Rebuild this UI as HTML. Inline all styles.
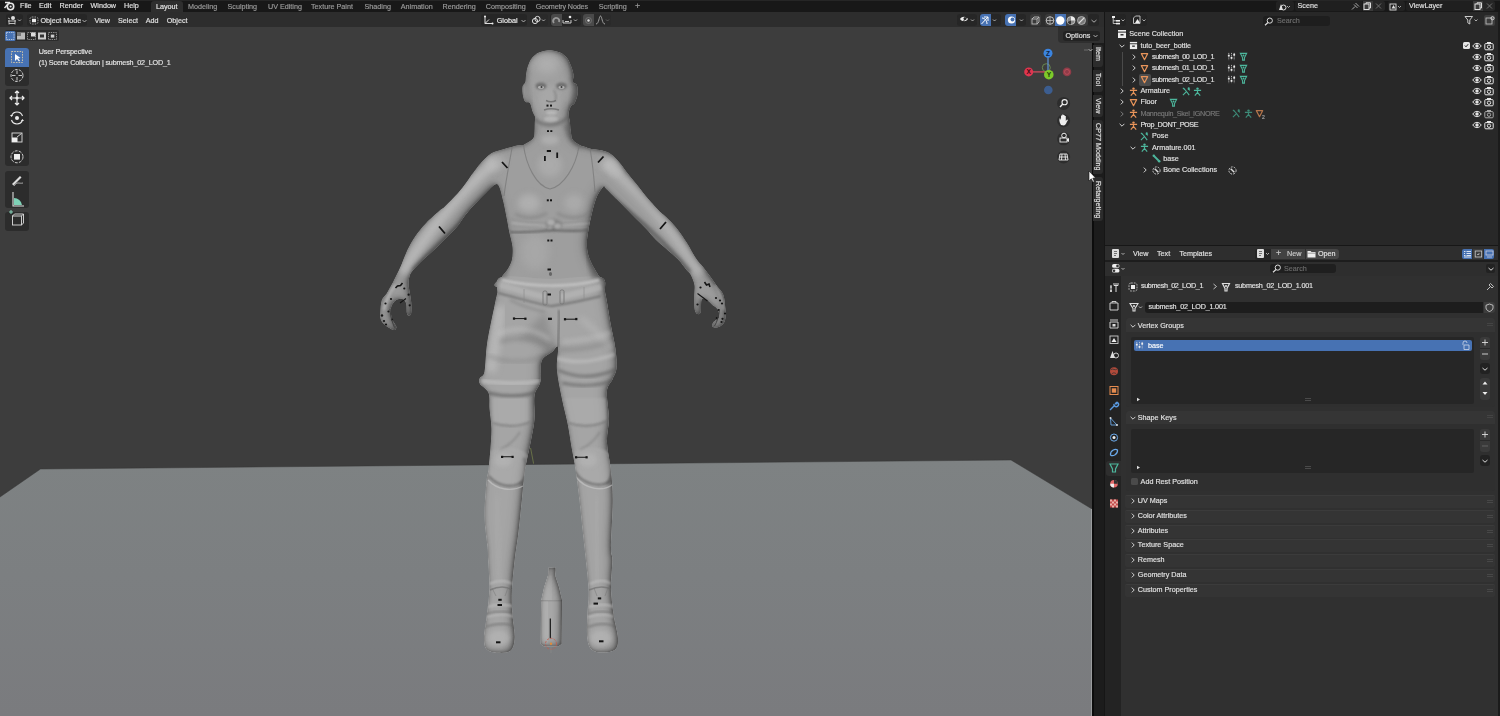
<!DOCTYPE html>
<html><head><meta charset="utf-8">
<style>
*{margin:0;padding:0;box-sizing:border-box}
html,body{width:1500px;height:716px;overflow:hidden;background:#171717;font-family:"Liberation Sans",sans-serif;color:#e2e2e2;font-size:7.2px}
.a{position:absolute}
.t{position:absolute;white-space:nowrap;line-height:8px;height:11px;padding-bottom:3px;-webkit-text-stroke:.15px currentColor;filter:grayscale(1)}
.g{color:#9c9c9c}
.w{color:#e6e6e6}
svg{position:absolute;overflow:visible}
#top{left:0;top:0;width:1500px;height:12px;background:#181818}
#vp{left:0;top:0;width:1105px;height:716px;background:#3d3d3d;overflow:hidden}
#vphdr{left:0;top:12px;width:1104px;height:15px;background:#2d2d2d}
#ntabs{left:1092px;top:43px;width:13px;height:673px;background:#1c1c1c}
#outl{left:1105px;top:12px;width:395px;height:233px;background:#282828}
#txthdr{left:1105px;top:246px;width:395px;height:15px;background:#2e2e2e}
#props{left:1105px;top:261px;width:395px;height:455px;background:#303030}
.btn{position:absolute;background:#2b2b2b;border-radius:2px}
.tab{position:absolute;background:#2a2a2a;border-radius:2px}
.row{position:absolute;left:1125px;width:370px;height:13px;background:#343434;border-radius:2px;border-top:1px solid #3b3b3b}
</style></head><body>
<div id="vp" class="a">
<svg width="1092" height="716" style="left:0;top:0">
<defs><linearGradient id="flg" x1="0" y1="460" x2="0" y2="716" gradientUnits="userSpaceOnUse"><stop offset="0" stop-color="#7e8283"/><stop offset=".45" stop-color="#7c7f81"/><stop offset="1" stop-color="#7a7b7e"/></linearGradient></defs><polygon points="0,497 40.5,469 1011,460 1092,509 1092,716 0,716" fill="url(#flg)"/><polyline points="0,497 40.5,469 1011,460 1092,509" fill="none" stroke="#353535" stroke-width=".8" opacity=".6"/>
<g id="fig"><defs>
<filter id="b0_5" x="-50%" y="-50%" width="200%" height="200%"><feGaussianBlur stdDeviation="0.5"/></filter>
<filter id="b0_8" x="-50%" y="-50%" width="200%" height="200%"><feGaussianBlur stdDeviation="0.8"/></filter>
<filter id="b1" x="-50%" y="-50%" width="200%" height="200%"><feGaussianBlur stdDeviation="1"/></filter>
<filter id="b1_5" x="-50%" y="-50%" width="200%" height="200%"><feGaussianBlur stdDeviation="1.5"/></filter>
<filter id="b2" x="-50%" y="-50%" width="200%" height="200%"><feGaussianBlur stdDeviation="2"/></filter>
<filter id="b3" x="-50%" y="-50%" width="200%" height="200%"><feGaussianBlur stdDeviation="3"/></filter>
<filter id="b4_5" x="-50%" y="-50%" width="200%" height="200%"><feGaussianBlur stdDeviation="4.5"/></filter>
<filter id="rim" x="-10%" y="-10%" width="120%" height="120%">
<feGaussianBlur in="SourceAlpha" stdDeviation="2" result="bl"/>
<feOffset in="bl" dx="-1.5" dy="-0.5" result="off"/>
<feComposite in="SourceAlpha" in2="off" operator="arithmetic" k2="1" k3="-1" result="rim"/>
<feFlood flood-color="#383838" flood-opacity="1"/>
<feComposite in2="rim" operator="in" result="rimc"/>
<feGaussianBlur in="SourceAlpha" stdDeviation="5" result="bl2"/>
<feOffset in="bl2" dx="-3.5" dy="-1" result="off2"/>
<feComposite in="SourceAlpha" in2="off2" operator="arithmetic" k2="1" k3="-1" result="rim2"/>
<feFlood flood-color="#4a4a4a" flood-opacity=".75"/>
<feComposite in2="rim2" operator="in" result="rimc2"/>
<feMerge><feMergeNode in="SourceGraphic"/><feMergeNode in="rimc2"/><feMergeNode in="rimc"/></feMerge>
</filter>
<clipPath id="cUp"><path d="M549.5,50.2 C546.0,50.2 541.9,51.2 539.0,52.5 C536.1,53.8 533.8,55.8 532.0,58.0 C530.2,60.2 529.0,63.2 528.0,66.0 C527.0,68.8 526.5,72.3 526.1,75.0 C525.7,77.7 526.0,80.0 525.4,81.9 C524.8,83.8 523.0,84.2 522.6,86.5 C522.2,88.8 522.5,93.2 523.0,95.7 C523.5,98.2 524.2,100.5 525.4,101.8 C526.6,103.1 528.7,101.5 530.0,103.3 C531.3,105.1 531.7,109.8 533.0,112.6 C534.3,115.4 535.4,118.0 538.0,120.0 C540.6,122.0 544.9,124.4 548.4,124.8 C551.9,125.2 555.9,124.0 559.0,122.5 C562.1,121.0 564.8,118.3 566.8,115.6 C568.8,112.9 569.4,108.5 570.7,106.4 C572.0,104.4 573.4,105.3 574.5,103.3 C575.6,101.2 577.2,97.2 577.6,94.1 C578.0,91.0 577.6,86.9 576.8,84.9 C576.0,82.9 573.5,83.6 573.0,81.9 C572.5,80.2 573.8,77.7 573.5,75.0 C573.2,72.3 572.1,68.8 571.0,66.0 C569.9,63.2 568.8,60.2 567.0,58.0 C565.2,55.8 562.9,53.8 560.0,52.5 C557.1,51.2 553.0,50.2 549.5,50.2Z"/><path d="M537.0,108.0 C539.8,107.0 547.2,114.0 552.0,114.0 C556.8,114.0 563.1,107.0 566.0,108.0 C568.9,109.0 568.7,116.2 569.5,120.0 C570.3,123.8 570.1,127.6 570.7,131.0 C571.3,134.4 571.1,137.6 573.0,140.2 C574.9,142.8 579.0,144.3 582.2,146.3 C585.4,148.3 603.7,151.1 592.0,152.0 C580.3,152.9 523.4,153.2 512.0,152.0 C500.6,150.8 520.3,147.0 523.8,144.8 C527.3,142.6 531.2,141.0 533.0,138.7 C534.8,136.4 534.3,134.1 534.6,131.0 C534.9,127.9 534.6,123.8 535.0,120.0 C535.4,116.2 534.2,109.0 537.0,108.0Z"/><path d="M523.0,145.0 C527.6,145.1 535.3,146.3 540.0,147.0 C544.7,147.7 547.2,149.0 551.0,149.0 C554.8,149.0 557.8,147.4 563.0,147.0 C568.2,146.6 577.5,146.0 582.0,146.3 C586.5,146.6 586.6,148.1 590.0,148.8 C593.4,149.5 598.8,149.7 602.3,150.6 C605.8,151.5 608.5,152.6 611.3,154.5 C614.1,156.4 616.5,159.3 619.1,162.3 C621.7,165.3 624.0,168.8 626.9,172.4 C629.8,176.0 633.1,180.0 636.3,184.0 C639.5,188.0 642.4,192.1 646.1,196.5 C649.8,200.9 655.4,207.1 658.7,210.5 C662.0,213.9 663.0,214.0 666.0,217.0 C669.0,220.0 673.6,224.4 677.0,228.7 C680.4,233.0 684.1,238.7 686.6,242.6 C689.1,246.5 690.3,249.1 692.0,252.0 C693.7,254.9 695.2,257.5 697.0,260.0 C698.8,262.5 700.8,264.2 703.0,267.0 C705.2,269.8 708.0,273.4 710.4,276.7 C712.8,279.9 715.2,283.6 717.3,286.5 C719.4,289.4 721.9,291.1 723.2,294.4 C724.5,297.7 724.7,302.4 725.1,306.1 C725.5,309.9 725.9,314.0 725.6,316.9 C725.3,319.8 724.6,321.9 723.2,323.7 C721.8,325.5 718.8,327.0 717.0,327.5 C715.2,328.0 713.0,327.4 712.4,326.5 C711.8,325.6 712.4,323.6 713.5,322.0 C714.6,320.4 718.6,319.1 719.2,316.9 C719.8,314.7 718.4,311.0 717.3,309.0 C716.2,307.0 714.2,306.5 712.4,305.0 C710.6,303.5 708.3,300.6 706.5,299.8 C704.7,299.0 702.6,298.0 701.6,300.0 C700.6,302.0 701.4,309.7 700.7,312.0 C700.1,314.3 698.7,314.3 697.7,314.0 C696.7,313.7 695.4,313.0 694.8,310.0 C694.2,307.0 694.3,300.2 694.3,296.0 C694.2,291.8 695.1,288.5 694.5,285.0 C693.9,281.5 692.2,277.5 690.9,275.0 C689.6,272.5 688.7,272.6 686.6,270.0 C684.5,267.4 681.7,263.0 678.2,259.4 C674.7,255.8 669.3,251.5 665.6,248.2 C661.9,244.9 659.1,243.1 655.9,239.8 C652.6,236.6 650.1,232.9 646.1,228.7 C642.1,224.5 637.0,219.6 632.1,214.7 C627.2,209.8 621.2,203.7 616.8,199.3 C612.4,194.9 607.9,190.3 605.7,188.2 C603.5,186.1 605.0,185.1 603.5,186.5 C602.0,187.9 598.8,192.3 596.8,196.8 C594.8,201.3 593.2,207.9 591.8,213.5 C590.4,219.1 589.2,225.3 588.4,230.3 C587.6,235.3 586.8,239.5 586.8,243.7 C586.8,247.9 587.3,251.5 588.4,255.4 C589.5,259.3 591.8,263.8 593.5,267.1 C595.2,270.5 597.1,272.7 598.5,275.5 C599.9,278.3 609.7,281.6 601.8,284.0 C593.9,286.4 568.4,289.5 551.0,290.0 C533.6,290.5 505.7,289.3 497.5,287.2 C489.3,285.1 500.1,280.0 501.7,277.2 C503.2,274.4 505.1,273.3 506.8,270.5 C508.5,267.7 510.8,264.3 511.8,260.4 C512.8,256.5 513.0,251.8 512.6,247.0 C512.2,242.2 510.3,236.7 509.3,231.9 C508.3,227.2 507.8,223.5 506.8,218.5 C505.8,213.5 504.7,207.1 503.4,201.8 C502.1,196.5 500.6,189.5 499.2,186.7 C497.8,183.8 497.1,183.5 494.7,184.7 C492.3,185.9 488.2,190.5 484.7,194.0 C481.2,197.5 476.8,201.9 473.5,205.5 C470.2,209.1 467.8,211.9 465.0,215.5 C462.2,219.1 460.2,223.1 457.0,226.8 C453.8,230.5 450.0,233.8 445.9,237.9 C441.8,242.0 436.8,247.2 432.5,251.3 C428.2,255.4 423.8,258.9 420.2,262.5 C416.6,266.1 413.1,269.7 411.2,272.6 C409.3,275.5 409.2,277.9 408.8,280.0 C408.4,282.1 408.5,283.4 408.6,285.0 C408.7,286.6 408.8,286.6 409.2,289.5 C409.6,292.4 410.9,298.3 411.2,302.2 C411.5,306.1 411.5,310.8 411.2,313.0 C410.9,315.2 409.9,315.4 409.2,315.5 C408.5,315.6 407.5,315.4 407.0,313.5 C406.5,311.6 406.8,306.4 406.3,304.1 C405.8,301.9 405.0,300.9 404.0,300.0 C403.0,299.1 401.8,298.7 400.4,298.8 C399.0,298.9 397.0,299.3 395.5,300.5 C394.0,301.7 392.3,304.1 391.5,306.0 C390.7,307.9 390.5,309.7 390.7,312.0 C390.9,314.3 391.6,317.7 392.5,320.0 C393.4,322.3 395.4,324.6 396.0,326.0 C396.6,327.4 396.4,327.8 396.0,328.5 C395.6,329.2 395.3,330.5 393.6,330.0 C391.9,329.5 387.9,327.4 385.8,325.7 C383.7,324.0 381.8,322.1 380.9,319.8 C380.0,317.5 380.2,315.3 380.4,312.0 C380.5,308.7 380.8,303.3 381.8,300.2 C382.9,297.1 385.0,296.1 386.7,293.4 C388.4,290.6 390.7,286.4 392.2,283.7 C393.7,281.0 394.3,279.6 395.6,277.0 C396.9,274.4 398.5,271.5 400.0,268.1 C401.5,264.8 403.0,260.4 404.5,256.9 C406.0,253.4 407.1,250.4 409.0,246.9 C410.9,243.4 412.9,239.6 415.7,235.7 C418.5,231.8 421.9,227.5 425.8,223.4 C429.7,219.3 436.1,213.7 439.2,211.0 C442.3,208.3 442.1,209.2 444.5,207.0 C446.9,204.8 450.4,201.3 453.4,198.1 C456.4,194.9 459.5,191.5 462.3,188.0 C465.1,184.5 467.8,180.2 470.2,176.9 C472.6,173.6 474.5,170.9 476.9,167.9 C479.3,164.9 482.1,161.5 484.7,159.0 C487.3,156.5 489.5,154.4 492.5,152.8 C495.5,151.2 499.2,150.5 502.6,149.5 C506.0,148.5 509.2,147.4 512.6,146.7 C516.0,145.9 518.4,144.9 523.0,145.0Z"/></clipPath>
<clipPath id="cPants"><path d="M501.8,277.0 C510.8,274.6 534.7,279.0 551.0,279.0 C567.3,279.0 590.8,274.6 599.8,277.0 C608.8,279.4 603.5,285.7 605.3,293.6 C607.1,301.5 609.0,315.4 610.7,324.5 C612.4,333.6 614.3,340.8 615.3,348.0 C616.3,355.2 617.0,362.8 616.5,368.0 C616.0,373.2 614.2,375.1 612.6,379.0 C611.0,382.9 607.5,384.7 606.9,391.3 C606.3,397.9 608.9,410.2 608.9,418.7 C608.9,427.2 606.6,433.7 606.9,442.2 C607.2,450.7 609.8,459.9 610.8,469.5 C611.8,479.1 612.8,487.0 612.8,500.0 C612.8,513.0 611.1,537.5 611.0,547.5 C610.9,557.5 612.4,553.2 612.4,560.0 C612.4,566.8 610.8,578.7 611.0,588.0 C611.2,597.3 612.6,607.4 613.8,615.8 C615.0,624.2 617.8,632.6 618.0,638.2 C618.2,643.8 617.8,647.0 615.2,649.4 C612.6,651.8 606.6,652.5 602.6,652.5 C598.6,652.5 594.0,651.8 591.5,649.4 C589.0,647.0 588.0,643.8 587.3,638.2 C586.6,632.6 587.1,623.5 587.3,615.8 C587.5,608.1 588.9,601.3 588.7,592.0 C588.5,582.7 586.9,570.0 585.9,560.0 C584.9,550.0 584.0,542.2 582.9,532.2 C581.8,522.2 580.7,510.4 579.5,500.0 C578.3,489.6 576.9,478.2 575.6,469.5 C574.3,460.8 573.0,455.5 571.7,448.0 C570.4,440.5 569.4,432.7 567.8,424.5 C566.2,416.3 563.8,408.1 562.0,399.0 C560.2,389.9 557.7,378.7 557.0,370.0 C556.3,361.3 558.8,350.0 558.0,347.0 C557.2,344.0 554.7,349.7 552.0,352.0 C549.3,354.3 543.6,355.9 541.7,360.8 C539.8,365.7 541.6,375.8 540.4,381.5 C539.2,387.2 535.5,389.0 534.5,395.2 C533.5,401.4 535.1,410.9 534.5,418.7 C533.9,426.5 532.2,433.7 530.6,442.2 C529.0,450.7 526.5,459.9 525.0,469.5 C523.5,479.1 523.0,489.6 521.9,500.0 C520.8,510.4 519.7,522.2 518.5,532.2 C517.3,542.2 515.8,550.0 514.7,560.0 C513.6,570.0 512.2,582.7 511.9,592.0 C511.5,601.3 512.1,608.1 512.6,615.8 C513.1,623.5 515.1,632.4 514.7,638.2 C514.4,644.0 513.3,648.4 510.5,650.8 C507.7,653.2 501.8,653.0 497.9,652.8 C493.9,652.6 489.1,651.8 486.8,649.4 C484.5,647.0 484.0,643.8 484.0,638.2 C484.0,632.6 485.9,624.2 486.8,615.8 C487.7,607.4 489.3,597.3 489.5,588.0 C489.7,578.7 488.5,566.8 488.2,560.0 C487.9,553.2 488.2,554.7 487.6,547.5 C487.0,540.3 484.8,527.8 484.6,516.8 C484.4,505.8 485.9,489.2 486.6,481.3 C487.3,473.4 488.0,475.1 488.6,469.5 C489.2,463.9 490.0,454.8 490.5,448.0 C491.0,441.2 491.6,435.0 491.5,428.5 C491.4,422.0 490.1,414.9 489.6,409.0 C489.1,403.1 490.2,397.2 488.6,393.0 C487.0,388.8 481.5,386.5 480.0,384.0 C478.5,381.5 479.1,380.1 479.8,378.0 C480.6,375.9 483.2,377.6 484.5,371.7 C485.8,365.8 485.6,353.5 487.3,342.6 C489.0,331.7 492.8,314.5 494.5,306.3 C496.2,298.1 496.1,298.5 497.3,293.6 C498.5,288.7 492.9,279.4 501.8,277.0Z"/></clipPath>
<clipPath id="cAll"><path d="M549.5,50.2 C546.0,50.2 541.9,51.2 539.0,52.5 C536.1,53.8 533.8,55.8 532.0,58.0 C530.2,60.2 529.0,63.2 528.0,66.0 C527.0,68.8 526.5,72.3 526.1,75.0 C525.7,77.7 526.0,80.0 525.4,81.9 C524.8,83.8 523.0,84.2 522.6,86.5 C522.2,88.8 522.5,93.2 523.0,95.7 C523.5,98.2 524.2,100.5 525.4,101.8 C526.6,103.1 528.7,101.5 530.0,103.3 C531.3,105.1 531.7,109.8 533.0,112.6 C534.3,115.4 535.4,118.0 538.0,120.0 C540.6,122.0 544.9,124.4 548.4,124.8 C551.9,125.2 555.9,124.0 559.0,122.5 C562.1,121.0 564.8,118.3 566.8,115.6 C568.8,112.9 569.4,108.5 570.7,106.4 C572.0,104.4 573.4,105.3 574.5,103.3 C575.6,101.2 577.2,97.2 577.6,94.1 C578.0,91.0 577.6,86.9 576.8,84.9 C576.0,82.9 573.5,83.6 573.0,81.9 C572.5,80.2 573.8,77.7 573.5,75.0 C573.2,72.3 572.1,68.8 571.0,66.0 C569.9,63.2 568.8,60.2 567.0,58.0 C565.2,55.8 562.9,53.8 560.0,52.5 C557.1,51.2 553.0,50.2 549.5,50.2Z"/><path d="M537.0,108.0 C539.8,107.0 547.2,114.0 552.0,114.0 C556.8,114.0 563.1,107.0 566.0,108.0 C568.9,109.0 568.7,116.2 569.5,120.0 C570.3,123.8 570.1,127.6 570.7,131.0 C571.3,134.4 571.1,137.6 573.0,140.2 C574.9,142.8 579.0,144.3 582.2,146.3 C585.4,148.3 603.7,151.1 592.0,152.0 C580.3,152.9 523.4,153.2 512.0,152.0 C500.6,150.8 520.3,147.0 523.8,144.8 C527.3,142.6 531.2,141.0 533.0,138.7 C534.8,136.4 534.3,134.1 534.6,131.0 C534.9,127.9 534.6,123.8 535.0,120.0 C535.4,116.2 534.2,109.0 537.0,108.0Z"/><path d="M523.0,145.0 C527.6,145.1 535.3,146.3 540.0,147.0 C544.7,147.7 547.2,149.0 551.0,149.0 C554.8,149.0 557.8,147.4 563.0,147.0 C568.2,146.6 577.5,146.0 582.0,146.3 C586.5,146.6 586.6,148.1 590.0,148.8 C593.4,149.5 598.8,149.7 602.3,150.6 C605.8,151.5 608.5,152.6 611.3,154.5 C614.1,156.4 616.5,159.3 619.1,162.3 C621.7,165.3 624.0,168.8 626.9,172.4 C629.8,176.0 633.1,180.0 636.3,184.0 C639.5,188.0 642.4,192.1 646.1,196.5 C649.8,200.9 655.4,207.1 658.7,210.5 C662.0,213.9 663.0,214.0 666.0,217.0 C669.0,220.0 673.6,224.4 677.0,228.7 C680.4,233.0 684.1,238.7 686.6,242.6 C689.1,246.5 690.3,249.1 692.0,252.0 C693.7,254.9 695.2,257.5 697.0,260.0 C698.8,262.5 700.8,264.2 703.0,267.0 C705.2,269.8 708.0,273.4 710.4,276.7 C712.8,279.9 715.2,283.6 717.3,286.5 C719.4,289.4 721.9,291.1 723.2,294.4 C724.5,297.7 724.7,302.4 725.1,306.1 C725.5,309.9 725.9,314.0 725.6,316.9 C725.3,319.8 724.6,321.9 723.2,323.7 C721.8,325.5 718.8,327.0 717.0,327.5 C715.2,328.0 713.0,327.4 712.4,326.5 C711.8,325.6 712.4,323.6 713.5,322.0 C714.6,320.4 718.6,319.1 719.2,316.9 C719.8,314.7 718.4,311.0 717.3,309.0 C716.2,307.0 714.2,306.5 712.4,305.0 C710.6,303.5 708.3,300.6 706.5,299.8 C704.7,299.0 702.6,298.0 701.6,300.0 C700.6,302.0 701.4,309.7 700.7,312.0 C700.1,314.3 698.7,314.3 697.7,314.0 C696.7,313.7 695.4,313.0 694.8,310.0 C694.2,307.0 694.3,300.2 694.3,296.0 C694.2,291.8 695.1,288.5 694.5,285.0 C693.9,281.5 692.2,277.5 690.9,275.0 C689.6,272.5 688.7,272.6 686.6,270.0 C684.5,267.4 681.7,263.0 678.2,259.4 C674.7,255.8 669.3,251.5 665.6,248.2 C661.9,244.9 659.1,243.1 655.9,239.8 C652.6,236.6 650.1,232.9 646.1,228.7 C642.1,224.5 637.0,219.6 632.1,214.7 C627.2,209.8 621.2,203.7 616.8,199.3 C612.4,194.9 607.9,190.3 605.7,188.2 C603.5,186.1 605.0,185.1 603.5,186.5 C602.0,187.9 598.8,192.3 596.8,196.8 C594.8,201.3 593.2,207.9 591.8,213.5 C590.4,219.1 589.2,225.3 588.4,230.3 C587.6,235.3 586.8,239.5 586.8,243.7 C586.8,247.9 587.3,251.5 588.4,255.4 C589.5,259.3 591.8,263.8 593.5,267.1 C595.2,270.5 597.1,272.7 598.5,275.5 C599.9,278.3 609.7,281.6 601.8,284.0 C593.9,286.4 568.4,289.5 551.0,290.0 C533.6,290.5 505.7,289.3 497.5,287.2 C489.3,285.1 500.1,280.0 501.7,277.2 C503.2,274.4 505.1,273.3 506.8,270.5 C508.5,267.7 510.8,264.3 511.8,260.4 C512.8,256.5 513.0,251.8 512.6,247.0 C512.2,242.2 510.3,236.7 509.3,231.9 C508.3,227.2 507.8,223.5 506.8,218.5 C505.8,213.5 504.7,207.1 503.4,201.8 C502.1,196.5 500.6,189.5 499.2,186.7 C497.8,183.8 497.1,183.5 494.7,184.7 C492.3,185.9 488.2,190.5 484.7,194.0 C481.2,197.5 476.8,201.9 473.5,205.5 C470.2,209.1 467.8,211.9 465.0,215.5 C462.2,219.1 460.2,223.1 457.0,226.8 C453.8,230.5 450.0,233.8 445.9,237.9 C441.8,242.0 436.8,247.2 432.5,251.3 C428.2,255.4 423.8,258.9 420.2,262.5 C416.6,266.1 413.1,269.7 411.2,272.6 C409.3,275.5 409.2,277.9 408.8,280.0 C408.4,282.1 408.5,283.4 408.6,285.0 C408.7,286.6 408.8,286.6 409.2,289.5 C409.6,292.4 410.9,298.3 411.2,302.2 C411.5,306.1 411.5,310.8 411.2,313.0 C410.9,315.2 409.9,315.4 409.2,315.5 C408.5,315.6 407.5,315.4 407.0,313.5 C406.5,311.6 406.8,306.4 406.3,304.1 C405.8,301.9 405.0,300.9 404.0,300.0 C403.0,299.1 401.8,298.7 400.4,298.8 C399.0,298.9 397.0,299.3 395.5,300.5 C394.0,301.7 392.3,304.1 391.5,306.0 C390.7,307.9 390.5,309.7 390.7,312.0 C390.9,314.3 391.6,317.7 392.5,320.0 C393.4,322.3 395.4,324.6 396.0,326.0 C396.6,327.4 396.4,327.8 396.0,328.5 C395.6,329.2 395.3,330.5 393.6,330.0 C391.9,329.5 387.9,327.4 385.8,325.7 C383.7,324.0 381.8,322.1 380.9,319.8 C380.0,317.5 380.2,315.3 380.4,312.0 C380.5,308.7 380.8,303.3 381.8,300.2 C382.9,297.1 385.0,296.1 386.7,293.4 C388.4,290.6 390.7,286.4 392.2,283.7 C393.7,281.0 394.3,279.6 395.6,277.0 C396.9,274.4 398.5,271.5 400.0,268.1 C401.5,264.8 403.0,260.4 404.5,256.9 C406.0,253.4 407.1,250.4 409.0,246.9 C410.9,243.4 412.9,239.6 415.7,235.7 C418.5,231.8 421.9,227.5 425.8,223.4 C429.7,219.3 436.1,213.7 439.2,211.0 C442.3,208.3 442.1,209.2 444.5,207.0 C446.9,204.8 450.4,201.3 453.4,198.1 C456.4,194.9 459.5,191.5 462.3,188.0 C465.1,184.5 467.8,180.2 470.2,176.9 C472.6,173.6 474.5,170.9 476.9,167.9 C479.3,164.9 482.1,161.5 484.7,159.0 C487.3,156.5 489.5,154.4 492.5,152.8 C495.5,151.2 499.2,150.5 502.6,149.5 C506.0,148.5 509.2,147.4 512.6,146.7 C516.0,145.9 518.4,144.9 523.0,145.0Z"/><path d="M501.8,277.0 C510.8,274.6 534.7,279.0 551.0,279.0 C567.3,279.0 590.8,274.6 599.8,277.0 C608.8,279.4 603.5,285.7 605.3,293.6 C607.1,301.5 609.0,315.4 610.7,324.5 C612.4,333.6 614.3,340.8 615.3,348.0 C616.3,355.2 617.0,362.8 616.5,368.0 C616.0,373.2 614.2,375.1 612.6,379.0 C611.0,382.9 607.5,384.7 606.9,391.3 C606.3,397.9 608.9,410.2 608.9,418.7 C608.9,427.2 606.6,433.7 606.9,442.2 C607.2,450.7 609.8,459.9 610.8,469.5 C611.8,479.1 612.8,487.0 612.8,500.0 C612.8,513.0 611.1,537.5 611.0,547.5 C610.9,557.5 612.4,553.2 612.4,560.0 C612.4,566.8 610.8,578.7 611.0,588.0 C611.2,597.3 612.6,607.4 613.8,615.8 C615.0,624.2 617.8,632.6 618.0,638.2 C618.2,643.8 617.8,647.0 615.2,649.4 C612.6,651.8 606.6,652.5 602.6,652.5 C598.6,652.5 594.0,651.8 591.5,649.4 C589.0,647.0 588.0,643.8 587.3,638.2 C586.6,632.6 587.1,623.5 587.3,615.8 C587.5,608.1 588.9,601.3 588.7,592.0 C588.5,582.7 586.9,570.0 585.9,560.0 C584.9,550.0 584.0,542.2 582.9,532.2 C581.8,522.2 580.7,510.4 579.5,500.0 C578.3,489.6 576.9,478.2 575.6,469.5 C574.3,460.8 573.0,455.5 571.7,448.0 C570.4,440.5 569.4,432.7 567.8,424.5 C566.2,416.3 563.8,408.1 562.0,399.0 C560.2,389.9 557.7,378.7 557.0,370.0 C556.3,361.3 558.8,350.0 558.0,347.0 C557.2,344.0 554.7,349.7 552.0,352.0 C549.3,354.3 543.6,355.9 541.7,360.8 C539.8,365.7 541.6,375.8 540.4,381.5 C539.2,387.2 535.5,389.0 534.5,395.2 C533.5,401.4 535.1,410.9 534.5,418.7 C533.9,426.5 532.2,433.7 530.6,442.2 C529.0,450.7 526.5,459.9 525.0,469.5 C523.5,479.1 523.0,489.6 521.9,500.0 C520.8,510.4 519.7,522.2 518.5,532.2 C517.3,542.2 515.8,550.0 514.7,560.0 C513.6,570.0 512.2,582.7 511.9,592.0 C511.5,601.3 512.1,608.1 512.6,615.8 C513.1,623.5 515.1,632.4 514.7,638.2 C514.4,644.0 513.3,648.4 510.5,650.8 C507.7,653.2 501.8,653.0 497.9,652.8 C493.9,652.6 489.1,651.8 486.8,649.4 C484.5,647.0 484.0,643.8 484.0,638.2 C484.0,632.6 485.9,624.2 486.8,615.8 C487.7,607.4 489.3,597.3 489.5,588.0 C489.7,578.7 488.5,566.8 488.2,560.0 C487.9,553.2 488.2,554.7 487.6,547.5 C487.0,540.3 484.8,527.8 484.6,516.8 C484.4,505.8 485.9,489.2 486.6,481.3 C487.3,473.4 488.0,475.1 488.6,469.5 C489.2,463.9 490.0,454.8 490.5,448.0 C491.0,441.2 491.6,435.0 491.5,428.5 C491.4,422.0 490.1,414.9 489.6,409.0 C489.1,403.1 490.2,397.2 488.6,393.0 C487.0,388.8 481.5,386.5 480.0,384.0 C478.5,381.5 479.1,380.1 479.8,378.0 C480.6,375.9 483.2,377.6 484.5,371.7 C485.8,365.8 485.6,353.5 487.3,342.6 C489.0,331.7 492.8,314.5 494.5,306.3 C496.2,298.1 496.1,298.5 497.3,293.6 C498.5,288.7 492.9,279.4 501.8,277.0Z"/></clipPath>
</defs>
<g filter="url(#rim)">
<path d="M523.0,145.0 C527.6,145.1 535.3,146.3 540.0,147.0 C544.7,147.7 547.2,149.0 551.0,149.0 C554.8,149.0 557.8,147.4 563.0,147.0 C568.2,146.6 577.5,146.0 582.0,146.3 C586.5,146.6 586.6,148.1 590.0,148.8 C593.4,149.5 598.8,149.7 602.3,150.6 C605.8,151.5 608.5,152.6 611.3,154.5 C614.1,156.4 616.5,159.3 619.1,162.3 C621.7,165.3 624.0,168.8 626.9,172.4 C629.8,176.0 633.1,180.0 636.3,184.0 C639.5,188.0 642.4,192.1 646.1,196.5 C649.8,200.9 655.4,207.1 658.7,210.5 C662.0,213.9 663.0,214.0 666.0,217.0 C669.0,220.0 673.6,224.4 677.0,228.7 C680.4,233.0 684.1,238.7 686.6,242.6 C689.1,246.5 690.3,249.1 692.0,252.0 C693.7,254.9 695.2,257.5 697.0,260.0 C698.8,262.5 700.8,264.2 703.0,267.0 C705.2,269.8 708.0,273.4 710.4,276.7 C712.8,279.9 715.2,283.6 717.3,286.5 C719.4,289.4 721.9,291.1 723.2,294.4 C724.5,297.7 724.7,302.4 725.1,306.1 C725.5,309.9 725.9,314.0 725.6,316.9 C725.3,319.8 724.6,321.9 723.2,323.7 C721.8,325.5 718.8,327.0 717.0,327.5 C715.2,328.0 713.0,327.4 712.4,326.5 C711.8,325.6 712.4,323.6 713.5,322.0 C714.6,320.4 718.6,319.1 719.2,316.9 C719.8,314.7 718.4,311.0 717.3,309.0 C716.2,307.0 714.2,306.5 712.4,305.0 C710.6,303.5 708.3,300.6 706.5,299.8 C704.7,299.0 702.6,298.0 701.6,300.0 C700.6,302.0 701.4,309.7 700.7,312.0 C700.1,314.3 698.7,314.3 697.7,314.0 C696.7,313.7 695.4,313.0 694.8,310.0 C694.2,307.0 694.3,300.2 694.3,296.0 C694.2,291.8 695.1,288.5 694.5,285.0 C693.9,281.5 692.2,277.5 690.9,275.0 C689.6,272.5 688.7,272.6 686.6,270.0 C684.5,267.4 681.7,263.0 678.2,259.4 C674.7,255.8 669.3,251.5 665.6,248.2 C661.9,244.9 659.1,243.1 655.9,239.8 C652.6,236.6 650.1,232.9 646.1,228.7 C642.1,224.5 637.0,219.6 632.1,214.7 C627.2,209.8 621.2,203.7 616.8,199.3 C612.4,194.9 607.9,190.3 605.7,188.2 C603.5,186.1 605.0,185.1 603.5,186.5 C602.0,187.9 598.8,192.3 596.8,196.8 C594.8,201.3 593.2,207.9 591.8,213.5 C590.4,219.1 589.2,225.3 588.4,230.3 C587.6,235.3 586.8,239.5 586.8,243.7 C586.8,247.9 587.3,251.5 588.4,255.4 C589.5,259.3 591.8,263.8 593.5,267.1 C595.2,270.5 597.1,272.7 598.5,275.5 C599.9,278.3 609.7,281.6 601.8,284.0 C593.9,286.4 568.4,289.5 551.0,290.0 C533.6,290.5 505.7,289.3 497.5,287.2 C489.3,285.1 500.1,280.0 501.7,277.2 C503.2,274.4 505.1,273.3 506.8,270.5 C508.5,267.7 510.8,264.3 511.8,260.4 C512.8,256.5 513.0,251.8 512.6,247.0 C512.2,242.2 510.3,236.7 509.3,231.9 C508.3,227.2 507.8,223.5 506.8,218.5 C505.8,213.5 504.7,207.1 503.4,201.8 C502.1,196.5 500.6,189.5 499.2,186.7 C497.8,183.8 497.1,183.5 494.7,184.7 C492.3,185.9 488.2,190.5 484.7,194.0 C481.2,197.5 476.8,201.9 473.5,205.5 C470.2,209.1 467.8,211.9 465.0,215.5 C462.2,219.1 460.2,223.1 457.0,226.8 C453.8,230.5 450.0,233.8 445.9,237.9 C441.8,242.0 436.8,247.2 432.5,251.3 C428.2,255.4 423.8,258.9 420.2,262.5 C416.6,266.1 413.1,269.7 411.2,272.6 C409.3,275.5 409.2,277.9 408.8,280.0 C408.4,282.1 408.5,283.4 408.6,285.0 C408.7,286.6 408.8,286.6 409.2,289.5 C409.6,292.4 410.9,298.3 411.2,302.2 C411.5,306.1 411.5,310.8 411.2,313.0 C410.9,315.2 409.9,315.4 409.2,315.5 C408.5,315.6 407.5,315.4 407.0,313.5 C406.5,311.6 406.8,306.4 406.3,304.1 C405.8,301.9 405.0,300.9 404.0,300.0 C403.0,299.1 401.8,298.7 400.4,298.8 C399.0,298.9 397.0,299.3 395.5,300.5 C394.0,301.7 392.3,304.1 391.5,306.0 C390.7,307.9 390.5,309.7 390.7,312.0 C390.9,314.3 391.6,317.7 392.5,320.0 C393.4,322.3 395.4,324.6 396.0,326.0 C396.6,327.4 396.4,327.8 396.0,328.5 C395.6,329.2 395.3,330.5 393.6,330.0 C391.9,329.5 387.9,327.4 385.8,325.7 C383.7,324.0 381.8,322.1 380.9,319.8 C380.0,317.5 380.2,315.3 380.4,312.0 C380.5,308.7 380.8,303.3 381.8,300.2 C382.9,297.1 385.0,296.1 386.7,293.4 C388.4,290.6 390.7,286.4 392.2,283.7 C393.7,281.0 394.3,279.6 395.6,277.0 C396.9,274.4 398.5,271.5 400.0,268.1 C401.5,264.8 403.0,260.4 404.5,256.9 C406.0,253.4 407.1,250.4 409.0,246.9 C410.9,243.4 412.9,239.6 415.7,235.7 C418.5,231.8 421.9,227.5 425.8,223.4 C429.7,219.3 436.1,213.7 439.2,211.0 C442.3,208.3 442.1,209.2 444.5,207.0 C446.9,204.8 450.4,201.3 453.4,198.1 C456.4,194.9 459.5,191.5 462.3,188.0 C465.1,184.5 467.8,180.2 470.2,176.9 C472.6,173.6 474.5,170.9 476.9,167.9 C479.3,164.9 482.1,161.5 484.7,159.0 C487.3,156.5 489.5,154.4 492.5,152.8 C495.5,151.2 499.2,150.5 502.6,149.5 C506.0,148.5 509.2,147.4 512.6,146.7 C516.0,145.9 518.4,144.9 523.0,145.0Z" fill="#9e9e9e"/><path d="M537.0,108.0 C539.8,107.0 547.2,114.0 552.0,114.0 C556.8,114.0 563.1,107.0 566.0,108.0 C568.9,109.0 568.7,116.2 569.5,120.0 C570.3,123.8 570.1,127.6 570.7,131.0 C571.3,134.4 571.1,137.6 573.0,140.2 C574.9,142.8 579.0,144.3 582.2,146.3 C585.4,148.3 603.7,151.1 592.0,152.0 C580.3,152.9 523.4,153.2 512.0,152.0 C500.6,150.8 520.3,147.0 523.8,144.8 C527.3,142.6 531.2,141.0 533.0,138.7 C534.8,136.4 534.3,134.1 534.6,131.0 C534.9,127.9 534.6,123.8 535.0,120.0 C535.4,116.2 534.2,109.0 537.0,108.0Z" fill="#9e9e9e"/><path d="M549.5,50.2 C546.0,50.2 541.9,51.2 539.0,52.5 C536.1,53.8 533.8,55.8 532.0,58.0 C530.2,60.2 529.0,63.2 528.0,66.0 C527.0,68.8 526.5,72.3 526.1,75.0 C525.7,77.7 526.0,80.0 525.4,81.9 C524.8,83.8 523.0,84.2 522.6,86.5 C522.2,88.8 522.5,93.2 523.0,95.7 C523.5,98.2 524.2,100.5 525.4,101.8 C526.6,103.1 528.7,101.5 530.0,103.3 C531.3,105.1 531.7,109.8 533.0,112.6 C534.3,115.4 535.4,118.0 538.0,120.0 C540.6,122.0 544.9,124.4 548.4,124.8 C551.9,125.2 555.9,124.0 559.0,122.5 C562.1,121.0 564.8,118.3 566.8,115.6 C568.8,112.9 569.4,108.5 570.7,106.4 C572.0,104.4 573.4,105.3 574.5,103.3 C575.6,101.2 577.2,97.2 577.6,94.1 C578.0,91.0 577.6,86.9 576.8,84.9 C576.0,82.9 573.5,83.6 573.0,81.9 C572.5,80.2 573.8,77.7 573.5,75.0 C573.2,72.3 572.1,68.8 571.0,66.0 C569.9,63.2 568.8,60.2 567.0,58.0 C565.2,55.8 562.9,53.8 560.0,52.5 C557.1,51.2 553.0,50.2 549.5,50.2Z" fill="#a0a0a0"/>
<path d="M501.8,277.0 C510.8,274.6 534.7,279.0 551.0,279.0 C567.3,279.0 590.8,274.6 599.8,277.0 C608.8,279.4 603.5,285.7 605.3,293.6 C607.1,301.5 609.0,315.4 610.7,324.5 C612.4,333.6 614.3,340.8 615.3,348.0 C616.3,355.2 617.0,362.8 616.5,368.0 C616.0,373.2 614.2,375.1 612.6,379.0 C611.0,382.9 607.5,384.7 606.9,391.3 C606.3,397.9 608.9,410.2 608.9,418.7 C608.9,427.2 606.6,433.7 606.9,442.2 C607.2,450.7 609.8,459.9 610.8,469.5 C611.8,479.1 612.8,487.0 612.8,500.0 C612.8,513.0 611.1,537.5 611.0,547.5 C610.9,557.5 612.4,553.2 612.4,560.0 C612.4,566.8 610.8,578.7 611.0,588.0 C611.2,597.3 612.6,607.4 613.8,615.8 C615.0,624.2 617.8,632.6 618.0,638.2 C618.2,643.8 617.8,647.0 615.2,649.4 C612.6,651.8 606.6,652.5 602.6,652.5 C598.6,652.5 594.0,651.8 591.5,649.4 C589.0,647.0 588.0,643.8 587.3,638.2 C586.6,632.6 587.1,623.5 587.3,615.8 C587.5,608.1 588.9,601.3 588.7,592.0 C588.5,582.7 586.9,570.0 585.9,560.0 C584.9,550.0 584.0,542.2 582.9,532.2 C581.8,522.2 580.7,510.4 579.5,500.0 C578.3,489.6 576.9,478.2 575.6,469.5 C574.3,460.8 573.0,455.5 571.7,448.0 C570.4,440.5 569.4,432.7 567.8,424.5 C566.2,416.3 563.8,408.1 562.0,399.0 C560.2,389.9 557.7,378.7 557.0,370.0 C556.3,361.3 558.8,350.0 558.0,347.0 C557.2,344.0 554.7,349.7 552.0,352.0 C549.3,354.3 543.6,355.9 541.7,360.8 C539.8,365.7 541.6,375.8 540.4,381.5 C539.2,387.2 535.5,389.0 534.5,395.2 C533.5,401.4 535.1,410.9 534.5,418.7 C533.9,426.5 532.2,433.7 530.6,442.2 C529.0,450.7 526.5,459.9 525.0,469.5 C523.5,479.1 523.0,489.6 521.9,500.0 C520.8,510.4 519.7,522.2 518.5,532.2 C517.3,542.2 515.8,550.0 514.7,560.0 C513.6,570.0 512.2,582.7 511.9,592.0 C511.5,601.3 512.1,608.1 512.6,615.8 C513.1,623.5 515.1,632.4 514.7,638.2 C514.4,644.0 513.3,648.4 510.5,650.8 C507.7,653.2 501.8,653.0 497.9,652.8 C493.9,652.6 489.1,651.8 486.8,649.4 C484.5,647.0 484.0,643.8 484.0,638.2 C484.0,632.6 485.9,624.2 486.8,615.8 C487.7,607.4 489.3,597.3 489.5,588.0 C489.7,578.7 488.5,566.8 488.2,560.0 C487.9,553.2 488.2,554.7 487.6,547.5 C487.0,540.3 484.8,527.8 484.6,516.8 C484.4,505.8 485.9,489.2 486.6,481.3 C487.3,473.4 488.0,475.1 488.6,469.5 C489.2,463.9 490.0,454.8 490.5,448.0 C491.0,441.2 491.6,435.0 491.5,428.5 C491.4,422.0 490.1,414.9 489.6,409.0 C489.1,403.1 490.2,397.2 488.6,393.0 C487.0,388.8 481.5,386.5 480.0,384.0 C478.5,381.5 479.1,380.1 479.8,378.0 C480.6,375.9 483.2,377.6 484.5,371.7 C485.8,365.8 485.6,353.5 487.3,342.6 C489.0,331.7 492.8,314.5 494.5,306.3 C496.2,298.1 496.1,298.5 497.3,293.6 C498.5,288.7 492.9,279.4 501.8,277.0Z" fill="#a5a5a5"/>
</g>
<g clip-path="url(#cAll)">
<!-- head shading -->
<ellipse cx="547" cy="64" rx="12" ry="10" fill="#c2c2c2" opacity=".4" filter="url(#b4_5)"/>
<ellipse cx="549" cy="100" rx="11" ry="14" fill="#b6b6b6" opacity=".35" filter="url(#b3)"/>
<path d="M572,58 C578,75 577,95 571,112" stroke="#4a4a4a" stroke-width="5" fill="none" opacity=".55" filter="url(#b2)"/>
<path d="M528,70 C526,80 527,95 531,106" stroke="#5a5a5a" stroke-width="3" fill="none" opacity=".35" filter="url(#b2)"/>
<ellipse cx="541" cy="86" rx="5.5" ry="3.4" fill="#606060" opacity=".75" filter="url(#b1)"/>
<ellipse cx="561.5" cy="86" rx="5.5" ry="3.4" fill="#606060" opacity=".75" filter="url(#b1)"/>
<ellipse cx="541" cy="87.2" rx="3" ry="1.5" fill="#bdbdbd" opacity=".85" filter="url(#b0_5)"/>
<ellipse cx="561.5" cy="87.2" rx="3" ry="1.5" fill="#bdbdbd" opacity=".85" filter="url(#b0_5)"/>
<circle cx="541.5" cy="87" r="1" fill="#3c3c3c"/><circle cx="561.5" cy="87" r="1" fill="#3c3c3c"/>
<path d="M551,86 V98" stroke="#c8c8c8" stroke-width="2.4" opacity=".6" filter="url(#b0_8)"/>
<path d="M554,90 C556,95 557,98 555,101" stroke="#666" stroke-width="1.5" fill="none" opacity=".5" filter="url(#b0_8)"/>
<path d="M546,100.5 C549,102 553,102 556,100.5" stroke="#555" stroke-width="1.4" fill="none" opacity=".6" filter="url(#b0_5)"/>
<path d="M544,110 C548,108.5 554,108.5 559,110" stroke="#6a6a6a" stroke-width="1.6" fill="none" opacity=".75" filter="url(#b0_5)"/>
<ellipse cx="551.5" cy="112.8" rx="5.5" ry="1.8" fill="#c4c4c4" opacity=".7" filter="url(#b0_8)"/>
<path d="M535,119 C542,127 558,127 568,117" stroke="#5e5e5e" stroke-width="4" fill="none" opacity=".55" filter="url(#b1_5)"/>
<ellipse cx="551" cy="119" rx="7" ry="3" fill="#c2c2c2" opacity=".6" filter="url(#b1)"/>
<path d="M566,124 C569,134 572,140 582,147" stroke="#5a5a5a" stroke-width="5" fill="none" opacity=".55" filter="url(#b2)"/>
<path d="M537,125 C536,134 532,140 522,146" stroke="#6a6a6a" stroke-width="3" fill="none" opacity=".4" filter="url(#b2)"/>
<ellipse cx="550" cy="140" rx="9" ry="5" fill="#bdbdbd" opacity=".5" filter="url(#b2)"/>
<!-- shoulders -->
<ellipse cx="495" cy="162" rx="10" ry="8" fill="#bcbcbc" opacity=".5" filter="url(#b3)"/>
<ellipse cx="608" cy="162" rx="10" ry="8" fill="#b4b4b4" opacity=".45" filter="url(#b3)"/>
<!-- torso -->
<path d="M512,148 C509,165 506,180 504,196" stroke="#777" stroke-width="1.1" fill="none" opacity=".7" filter="url(#b0_5)"/>
<path d="M523.5,145 C526,165 536,186 550,189 C564,186 576,166 579,146" stroke="#777" stroke-width="1.1" fill="none" opacity=".7" filter="url(#b0_5)"/>
<path d="M590,148 C592,160 594,178 595,192" stroke="#777" stroke-width="1.1" fill="none" opacity=".7" filter="url(#b0_5)"/>
<ellipse cx="550" cy="165" rx="12" ry="12" fill="#bababa" opacity=".45" filter="url(#b3)"/>
<ellipse cx="529" cy="203" rx="11" ry="9" fill="#bdbdbd" opacity=".55" filter="url(#b3)"/>
<ellipse cx="574" cy="203" rx="10" ry="9" fill="#b6b6b6" opacity=".5" filter="url(#b3)"/>
<path d="M515,214 C525,219 538,219 547,213 M557,213 C566,219 580,219 590,213" stroke="#7a7a7a" stroke-width="3" fill="none" opacity=".45" filter="url(#b1_5)"/>
<path d="M510,219 C525,222 540,223 547,224 M510,227 C525,227 538,227 547,227" stroke="#8a8a8a" stroke-width="1.6" fill="none" opacity=".55" filter="url(#b0_8)"/>
<path d="M592,219 C578,222 566,223 560,224 M590,227 C578,227 568,227 560,227" stroke="#8a8a8a" stroke-width="1.6" fill="none" opacity=".55" filter="url(#b0_8)"/>
<path d="M512,223 C525,225 538,225 547,226 M592,223 C578,225 566,225 560,226" stroke="#c0c0c0" stroke-width="1.6" fill="none" opacity=".5" filter="url(#b0_8)"/>
<path d="M510,232 C530,233 545,231 553,230 C565,231 580,231 589,230" stroke="#5a5a5a" stroke-width="2.2" fill="none" opacity=".8" filter="url(#b0_8)"/>
<ellipse cx="554" cy="225" rx="8" ry="6" fill="#707070" opacity=".55" filter="url(#b1_5)"/>
<ellipse cx="551" cy="222.5" rx="3.8" ry="3.2" fill="#b4b4b4" opacity=".85" filter="url(#b0_8)"/>
<ellipse cx="557.5" cy="226" rx="3.4" ry="2.8" fill="#b0b0b0" opacity=".85" filter="url(#b0_8)"/>
<ellipse cx="550" cy="227.5" rx="2.5" ry="1.8" fill="#a8a8a8" opacity=".7" filter="url(#b0_8)"/>
<ellipse cx="535" cy="252" rx="14" ry="18" fill="#b8b8b8" opacity=".35" filter="url(#b4_5)"/>
<path d="M508,236 C506,250 504,262 504,278" stroke="#666" stroke-width="6" fill="none" opacity=".5" filter="url(#b2)"/>
<path d="M590,236 C589,250 591,264 596,278" stroke="#555" stroke-width="7" fill="none" opacity=".55" filter="url(#b2)"/>
<ellipse cx="550.5" cy="274" rx="1.6" ry="2" fill="#666" filter="url(#b0_5)"/>
<!-- arms -->
<path d="M604,162 C633,184 670,224 701,274" stroke="#c2c2c2" stroke-width="11" fill="none" opacity=".6" filter="url(#b3)"/>
<path d="M496,162 C467,184 430,227 402,274" stroke="#c4c4c4" stroke-width="11" fill="none" opacity=".65" filter="url(#b3)"/>
<path d="M604,193 C632,212 662,238 690,272" stroke="#4a4a4a" stroke-width="4" fill="none" opacity=".55" filter="url(#b1_5)"/>
<path d="M497,193 C470,212 440,242 413,270" stroke="#505050" stroke-width="4" fill="none" opacity=".5" filter="url(#b1_5)"/>
<ellipse cx="614" cy="168" rx="8" ry="10" fill="#c0c0c0" opacity=".4" filter="url(#b2)" transform="rotate(-40 614 168)"/>
<!-- belt & pants -->
<path d="M502,280 C530,287 570,288 599,280" stroke="#c6c6c6" stroke-width="3" fill="none" opacity=".8" filter="url(#b0_8)"/>
<path d="M498,293 C525,300 545,306 552,306 C565,304 585,300 601,296" stroke="#666" stroke-width="2" fill="none" opacity=".75" filter="url(#b0_8)"/>
<path d="M500,285 C515,289 530,294 545,297 M560,297 C575,294 590,290 601,287" stroke="#bcbcbc" stroke-width="6" fill="none" opacity=".55" filter="url(#b1)"/>
<rect x="543" y="291" width="4" height="14" rx="1.5" fill="none" stroke="#7a7a7a" stroke-width="1" filter="url(#b0_5)"/>
<rect x="560" y="290" width="4" height="14" rx="1.5" fill="none" stroke="#7a7a7a" stroke-width="1" filter="url(#b0_5)"/>
<path d="M524,289 V303 M584,287 V300" stroke="#8a8a8a" stroke-width="1" opacity=".6"/>
<path d="M500,306 C498,330 494,350 490,372" stroke="#c6c6c6" stroke-width="12" fill="none" opacity=".5" filter="url(#b3)"/>
<path d="M545,312 C548,325 552,337 557,347 L548,356 C540,345 530,340 520,338Z" fill="#6e6e6e" opacity=".35" filter="url(#b3)"/>
<path d="M559,310 C560,322 558,335 558,347" stroke="#606060" stroke-width="2.5" fill="none" opacity=".6" filter="url(#b1)"/>
<path d="M510,300 C520,305 535,310 545,312" stroke="#707070" stroke-width="2" fill="none" opacity=".4" filter="url(#b1_5)"/>
<path d="M498,334 C515,326 535,328 550,340" stroke="#c6c6c6" stroke-width="4" fill="none" opacity=".45" filter="url(#b2)"/>
<path d="M500,342 C518,336 538,338 550,348" stroke="#707070" stroke-width="3" fill="none" opacity=".45" filter="url(#b2)"/>
<path d="M488,356 C505,362 525,364 545,356" stroke="#747474" stroke-width="3" fill="none" opacity=".4" filter="url(#b2)"/>
<path d="M562,342 C580,340 598,338 612,332" stroke="#c4c4c4" stroke-width="4" fill="none" opacity=".45" filter="url(#b2)"/>
<path d="M560,350 C578,350 598,347 614,340" stroke="#6c6c6c" stroke-width="3" fill="none" opacity=".45" filter="url(#b2)"/>
<path d="M556,358 C575,364 595,362 615,354" stroke="#c8c8c8" stroke-width="4" fill="none" opacity=".5" filter="url(#b1_5)"/>
<path d="M558,370 C575,378 595,378 615,370" stroke="#5c5c5c" stroke-width="3" fill="none" opacity=".6" filter="url(#b1_5)"/>
<path d="M482,381 C500,383 520,385 540,381" stroke="#cacaca" stroke-width="4" fill="none" opacity=".55" filter="url(#b1_5)"/>
<path d="M488,393 C505,397 525,397 540,391" stroke="#575757" stroke-width="3" fill="none" opacity=".65" filter="url(#b1_5)"/>
<path d="M562,383 C575,386 595,387 612,381" stroke="#575757" stroke-width="3" fill="none" opacity=".55" filter="url(#b1_5)"/>
<path d="M580,318 C595,328 605,343 615,348" stroke="#c4c4c4" stroke-width="6" fill="none" opacity=".4" filter="url(#b3)"/>
<path d="M493,398 H528 V422 C515,426 500,425 493,422Z" fill="#b4b4b4" opacity=".35" filter="url(#b1)"/>
<path d="M493,423 C505,427 518,427 530,422" stroke="#666" stroke-width="1.8" fill="none" opacity=".55" filter="url(#b0_8)"/>
<path d="M565,398 H606 V420 C595,426 578,426 570,422Z" fill="#b4b4b4" opacity=".35" filter="url(#b1)"/>
<path d="M569,423 C580,427 595,427 606,421" stroke="#666" stroke-width="1.8" fill="none" opacity=".55" filter="url(#b0_8)"/>
<path d="M520,432 C515,440 508,446 500,450" stroke="#707070" stroke-width="2" fill="none" opacity=".4" filter="url(#b1)"/>
<path d="M600,432 C595,440 588,446 580,450" stroke="#707070" stroke-width="2" fill="none" opacity=".4" filter="url(#b1)"/>
<path d="M490,452 C500,445 520,446 528,455 C530,466 526,478 518,485 C508,488 495,484 489,476Z" fill="#b0b0b0" opacity=".45" filter="url(#b1)"/>
<path d="M489,476 C497,486 512,489 522,482" stroke="#555" stroke-width="2" fill="none" opacity=".7" filter="url(#b0_8)"/>
<path d="M488,480 C497,490 512,492 523,486" stroke="#c8c8c8" stroke-width="1.4" fill="none" opacity=".6" filter="url(#b0_5)"/>
<path d="M524,458 C528,468 527,478 520,484" stroke="#5a5a5a" stroke-width="2.5" fill="none" opacity=".5" filter="url(#b1)"/>
<path d="M574,452 C584,445 604,446 612,455 C614,466 611,478 604,485 C594,488 581,484 576,476Z" fill="#b0b0b0" opacity=".45" filter="url(#b1)"/>
<path d="M575,472 C583,484 600,489 612,480" stroke="#555" stroke-width="2" fill="none" opacity=".7" filter="url(#b0_8)"/>
<path d="M576,477 C585,489 602,492 612,485" stroke="#c8c8c8" stroke-width="1.4" fill="none" opacity=".6" filter="url(#b0_5)"/>
<path d="M609,456 C613,466 613,476 607,484" stroke="#5a5a5a" stroke-width="2.5" fill="none" opacity=".5" filter="url(#b1)"/>
<ellipse cx="503" cy="460" rx="9" ry="7" fill="#bcbcbc" opacity=".45" filter="url(#b2)"/>
<ellipse cx="588" cy="460" rx="9" ry="7" fill="#bcbcbc" opacity=".45" filter="url(#b2)"/>
<path d="M497,495 C496,530 498,560 500,585" stroke="#b0b0b0" stroke-width="7" fill="none" opacity=".3" filter="url(#b3)"/>
<path d="M596,495 C596,530 597,560 598,585" stroke="#b0b0b0" stroke-width="7" fill="none" opacity=".3" filter="url(#b3)"/>
<path d="M489,584 C498,580 506,580 512,584" stroke="#c8c8c8" stroke-width="2" fill="none" opacity=".6" filter="url(#b0_8)"/>
<path d="M490,590 C499,586 506,586 512,590" stroke="#6a6a6a" stroke-width="1.4" fill="none" opacity=".6" filter="url(#b0_5)"/>
<path d="M492,588 L496,596 M508,588 L505,596" stroke="#777" stroke-width="1" fill="none" opacity=".5"/>
<path d="M487,607 C497,604 508,604 514,607" stroke="#c6c6c6" stroke-width="2.5" fill="none" opacity=".55" filter="url(#b0_8)"/>
<path d="M486,614 C497,611 508,611 514,614" stroke="#626262" stroke-width="1.6" fill="none" opacity=".6" filter="url(#b0_8)"/>
<path d="M486,617 C497,614 508,614 514,617" stroke="#c6c6c6" stroke-width="2.5" fill="none" opacity=".5" filter="url(#b0_8)"/>
<path d="M485,627 C497,623 508,623 515,627" stroke="#626262" stroke-width="1.6" fill="none" opacity=".6" filter="url(#b0_8)"/>
<ellipse cx="499" cy="638" rx="11" ry="8" fill="#bcbcbc" opacity=".5" filter="url(#b2)"/>
<path d="M590,584 C598,580 606,580 611,584" stroke="#c8c8c8" stroke-width="2" fill="none" opacity=".6" filter="url(#b0_8)"/>
<path d="M589,590 C598,586 606,586 612,590" stroke="#6a6a6a" stroke-width="1.4" fill="none" opacity=".6" filter="url(#b0_5)"/>
<path d="M594,588 L597,596 M608,588 L605,596" stroke="#777" stroke-width="1" fill="none" opacity=".5"/>
<path d="M588,607 C598,604 608,604 613,607" stroke="#c6c6c6" stroke-width="2.5" fill="none" opacity=".55" filter="url(#b0_8)"/>
<path d="M588,614 C598,611 608,611 614,614" stroke="#626262" stroke-width="1.6" fill="none" opacity=".6" filter="url(#b0_8)"/>
<path d="M588,617 C598,614 608,614 614,617" stroke="#c6c6c6" stroke-width="2.5" fill="none" opacity=".5" filter="url(#b0_8)"/>
<path d="M588,627 C598,623 608,623 616,627" stroke="#626262" stroke-width="1.6" fill="none" opacity=".6" filter="url(#b0_8)"/>
<ellipse cx="601" cy="638" rx="11" ry="8" fill="#bcbcbc" opacity=".5" filter="url(#b2)"/>
<!-- hands -->
<path d="M395,285 C390,292 386,300 384,310" stroke="#c8c8c8" stroke-width="3" fill="none" opacity=".5" filter="url(#b1)"/>
<path d="M715,285 C720,292 723,300 724,310" stroke="#bdbdbd" stroke-width="3" fill="none" opacity=".4" filter="url(#b1)"/>

</g>
<g filter="url(#rim)">
<path d="M548.6,567.5 L555.4,567.5 L555.6,570 L555.2,575.5 L559,587 L562.1,600.5 L561.6,644 L558,646.5 L544,646.5 L540.6,644 L541.2,600.5 L544.2,587 L548,575.5 L548.3,570Z" fill="#a9a9a9"/><path d="M544.2,587 L548,575.5 L552,575.5 L552,600.5 L541.2,600.5Z" fill="#b2b2b2" opacity=".6"/><rect x="542" y="601" width="6" height="43" fill="#b8b8b8" opacity=".5"/><path d="M541.2,600.8 H562" stroke="#8a8a8a" stroke-width=".8"/>
</g>
<g fill="#141414" stroke="#141414">
<rect x="546.5" y="104.6" width="2" height="2" stroke="none"/><rect x="550" y="104.6" width="2" height="2" stroke="none"/>
<rect x="547" y="130.2" width="2" height="1.8" stroke="none"/><rect x="550.3" y="130.2" width="2" height="1.8" stroke="none"/>
<rect x="546.8" y="150" width="4.2" height="2" stroke="none"/>
<path d="M544.9,156 V161 M557.2,152.5 V158" stroke-width="1.8" fill="none"/>
<path d="M502,162 L507.5,168 M603.5,156.5 L598,162.5" stroke-width="1.8" fill="none"/>
<rect x="546.8" y="199.3" width="2" height="2" stroke="none"/><rect x="550" y="199.3" width="2" height="2" stroke="none"/>
<rect x="547.3" y="239.5" width="2" height="2" stroke="none"/><rect x="550.5" y="239.5" width="2" height="2" stroke="none"/>
<rect x="547.5" y="268.5" width="3.5" height="2" stroke="none"/>
<rect x="547.5" y="293.5" width="3.5" height="2" stroke="none"/>
<path d="M439,226.5 L445,233.5 M660,229 L666,222" stroke-width="1.8" fill="none"/>
<path d="M513.5,318.6 H526 M564.5,319.2 H577" stroke-width="1" fill="none"/>
<rect x="512.9" y="317.4" width="2.2" height="2.3" stroke="none"/><rect x="524.3" y="317.6" width="2.2" height="2.3" stroke="none"/>
<rect x="563.9" y="318.1" width="2.2" height="2.3" stroke="none"/><rect x="575.2" y="317.9" width="2.2" height="2.3" stroke="none"/>
<rect x="548" y="317.7" width="3.9" height="2.3" stroke="none"/>
<path d="M501.5,456.8 H513 M575.5,457.2 H587" stroke-width="1.1" fill="none"/>
<rect x="501" y="455.8" width="2.2" height="2.2" stroke="none"/><rect x="511.5" y="455.8" width="2.2" height="2.2" stroke="none"/>
<rect x="575" y="456.2" width="2.2" height="2.2" stroke="none"/><rect x="585.5" y="456.2" width="2.2" height="2.2" stroke="none"/>
<rect x="498.3" y="598.8" width="3.4" height="2" stroke="none"/><rect x="497.5" y="604" width="4.5" height="2" stroke="none"/><rect x="496" y="641.3" width="4.5" height="2" stroke="none"/>
<rect x="597.8" y="597.4" width="3.4" height="2" stroke="none"/><rect x="593.5" y="602.6" width="4.5" height="2" stroke="none"/><rect x="599" y="640.3" width="4.5" height="2" stroke="none"/>
<path d="M550.3,618.6 V638.2" stroke-width="1.2" fill="none"/>
<path d="M395.5,288 L397.5,286 L400.5,285.5 L402.5,283" stroke-width="1.6" fill="none"/>
<circle cx="404.3" cy="288.5" r="1.1" stroke="none"/><circle cx="408.6" cy="294.7" r="1.1" stroke="none"/><circle cx="391" cy="299" r="1.1" stroke="none"/><circle cx="385.5" cy="303.5" r="1.1" stroke="none"/><circle cx="388.5" cy="311.5" r="1.1" stroke="none"/><circle cx="382" cy="315.5" r="1.2" stroke="none"/><circle cx="384" cy="321" r="1.1" stroke="none"/><circle cx="392" cy="319.5" r="1.1" stroke="none"/><circle cx="386" cy="324.5" r="1.1" stroke="none"/><circle cx="409.7" cy="305.3" r="1.1" stroke="none"/>
<path d="M400,303 L406,298.5" stroke-width="1.1" fill="none"/>
<path d="M704.5,282 L706.5,285 L709,284 L710,287" stroke-width="1.6" fill="none"/>
<circle cx="700.5" cy="287.5" r="1.1" stroke="none"/><circle cx="697.5" cy="304.5" r="1.1" stroke="none"/><circle cx="716" cy="298" r="1.1" stroke="none"/><circle cx="720" cy="300.5" r="1.1" stroke="none"/><circle cx="722" cy="303.5" r="1.1" stroke="none"/><circle cx="718.5" cy="310" r="1.1" stroke="none"/><circle cx="725" cy="313.5" r="1.1" stroke="none"/><circle cx="716.8" cy="318" r="1.1" stroke="none"/><circle cx="722.5" cy="318.8" r="1.1" stroke="none"/><circle cx="721.5" cy="322" r="1.1" stroke="none"/>
<path d="M697.5,293.5 L707.5,301" stroke-width="1.1" fill="none"/>
</g>
<circle cx="551" cy="643.8" r="5.5" fill="none" stroke="#c65a4a" stroke-width=".9" stroke-dasharray="2.2,1.3" opacity=".85"/>
<circle cx="551" cy="643.8" r="1.2" fill="#e08a3a"/>
<path d="M551,646 V653" stroke="#888" stroke-width=".8"/>
<path d="M530.6,448 L533.6,463.7" stroke="#8a9a50" stroke-width=".7" opacity=".8"/>
<path d="M390,309 C390.5,316 392,322 394.5,327.5" stroke="#3d3d3d" stroke-width="1" fill="none" opacity=".9"/>
<path d="M719.5,309 C719,316 717,322 714.5,326" stroke="#3d3d3d" stroke-width="1" fill="none" opacity=".9"/>
</g>
</svg>
</div>
<div id="top" class="a"></div>
<div id="vphdr" class="a"></div>
<div id="ntabs" class="a"></div>
<div id="outl" class="a"></div>
<div id="txthdr" class="a"></div>
<div id="props" class="a"></div>
<!-- top bar -->
<div class="a" style="left:0;top:0;width:1500px;height:1px;background:#262626"></div>
<svg style="left:4px;top:1px" width="11" height="10" viewBox="0 0 11 10">
<circle cx="6.5" cy="5.5" r="3.2" fill="none" stroke="#e8e8e8" stroke-width="1.6"/>
<circle cx="6.6" cy="5.5" r="1.1" fill="#e8e8e8"/>
<path d="M1,1.5 L6,1.5 M2.5,4 L4,4 M0.5,7 L4,3" stroke="#e8e8e8" stroke-width="1.4" fill="none"/>
</svg>
<div class="t" style="left:20px;top:1.5px">File</div>
<div class="t" style="left:39px;top:1.5px">Edit</div>
<div class="t" style="left:59.5px;top:1.5px">Render</div>
<div class="t" style="left:90.5px;top:1.5px">Window</div>
<div class="t" style="left:124px;top:1.5px">Help</div>
<div class="a" style="left:151px;top:1px;width:31.5px;height:11px;background:#2e2e2e;border-radius:3px 3px 0 0"></div>
<div class="t w" style="left:156px;top:3px">Layout</div>
<div class="t g" style="left:188px;top:3px">Modeling</div>
<div class="t g" style="left:227.5px;top:3px">Sculpting</div>
<div class="t g" style="left:268px;top:3px">UV Editing</div>
<div class="t g" style="left:311px;top:3px">Texture Paint</div>
<div class="t g" style="left:364.5px;top:3px">Shading</div>
<div class="t g" style="left:400.75px;top:3px">Animation</div>
<div class="t g" style="left:442.5px;top:3px">Rendering</div>
<div class="t g" style="left:485.75px;top:3px">Compositing</div>
<div class="t g" style="left:535.75px;top:3px;letter-spacing:-0.16px">Geometry Nodes</div>
<div class="t g" style="left:598.75px;top:3px">Scripting</div>
<div class="t g" style="left:635px;top:2px;font-size:9px">+</div>
<!-- scene / viewlayer -->
<div class="a" style="left:1276px;top:1px;width:18px;height:10px;background:#222;border-radius:2px"></div>
<svg style="left:1278px;top:2px" width="14" height="9" viewBox="0 0 14 9"><path d="M1,8 L3,2 L5,8Z" fill="#ddd"/><circle cx="5.5" cy="5.5" r="2.5" fill="none" stroke="#ddd" stroke-width="1"/><path d="M9,4 L10.5,5.5 L12,4" stroke="#ccc" fill="none" stroke-width=".8"/></svg>
<div class="a" style="left:1295px;top:1px;width:67px;height:10px;background:#1f1f1f;border-radius:2px 0 0 2px"></div>
<div class="t" style="left:1297.5px;top:2px">Scene</div>
<svg style="left:1351px;top:2px" width="9" height="8" viewBox="0 0 9 8"><path d="M1,7.5 L4,4.5 M3,2.5 L6.5,6 M4.5,1 L8,4.5" stroke="#aaa" stroke-width="1" fill="none"/></svg>
<div class="a" style="left:1362.5px;top:1px;width:10px;height:10px;background:#3a3a3a"></div>
<svg style="left:1363px;top:2px" width="9" height="8" viewBox="0 0 9 8"><rect x="1" y="2" width="5" height="5.5" fill="none" stroke="#ddd" stroke-width="1"/><path d="M3,2 V0.8 H7.5 V6 H6" stroke="#ddd" fill="none" stroke-width="1"/></svg>
<div class="a" style="left:1372.5px;top:1px;width:12px;height:10px;background:#262626;border-radius:0 2px 2px 0"></div>
<svg style="left:1375px;top:3px" width="7" height="6" viewBox="0 0 7 6"><path d="M1,.5 L6,5.5 M6,.5 L1,5.5" stroke="#777" stroke-width=".9"/></svg>
<div class="a" style="left:1388px;top:1px;width:17px;height:10px;background:#222;border-radius:2px"></div>
<svg style="left:1389px;top:2px" width="14" height="9" viewBox="0 0 14 9"><rect x="1" y="2" width="6" height="6" fill="none" stroke="#ccc" stroke-width="1"/><path d="M2.5,6.5 L4.5,3 L6.5,6.5Z" fill="#ddd"/><path d="M9,4 L10.5,5.5 L12,4" stroke="#ccc" fill="none" stroke-width=".8"/></svg>
<div class="a" style="left:1406px;top:1px;width:67px;height:10px;background:#1f1f1f;border-radius:2px 0 0 2px"></div>
<div class="t" style="left:1409px;top:2px">ViewLayer</div>
<div class="a" style="left:1473px;top:1px;width:10px;height:10px;background:#3a3a3a"></div>
<svg style="left:1473.5px;top:2px" width="9" height="8" viewBox="0 0 9 8"><rect x="1" y="2" width="5" height="5.5" fill="none" stroke="#ddd" stroke-width="1"/><path d="M3,2 V0.8 H7.5 V6 H6" stroke="#ddd" fill="none" stroke-width="1"/></svg>
<div class="a" style="left:1483px;top:1px;width:12px;height:10px;background:#262626;border-radius:0 2px 2px 0"></div>
<svg style="left:1486px;top:3px" width="7" height="6" viewBox="0 0 7 6"><path d="M1,.5 L6,5.5 M6,.5 L1,5.5" stroke="#777" stroke-width=".9"/></svg>
<!-- viewport header -->
<div class="a" style="left:6px;top:14px;width:17px;height:12px;background:#262626;border-radius:3px"></div>
<svg style="left:7px;top:15px" width="16" height="10" viewBox="0 0 16 10"><circle cx="6" cy="3" r="2" fill="#ddd"/><path d="M1,6 H9 M2,8.5 H8 M2,5 V9.5 M8,5 V9.5 M1,3 L3,4" stroke="#ccc" stroke-width=".9" fill="none"/><path d="M11,4.5 L12.5,6 L14,4.5" stroke="#ccc" fill="none" stroke-width=".8"/></svg>
<div class="a" style="left:27px;top:14px;width:60px;height:12px;background:#262626;border-radius:3px"></div>
<svg style="left:28.5px;top:15.5px" width="10" height="9" viewBox="0 0 10 9"><rect x="1" y="1" width="8" height="7" rx="2" fill="none" stroke="#bbb" stroke-width=".8" stroke-dasharray="1.5,1"/><rect x="3" y="2.8" width="4" height="3.4" fill="#eee"/></svg>
<div class="t" style="left:40.5px;top:16.5px">Object Mode</div>
<svg style="left:82px;top:18.5px" width="5" height="4" viewBox="0 0 5 4"><path d="M.5,1 L2.5,3 L4.5,1" stroke="#ccc" fill="none" stroke-width=".8"/></svg>
<div class="t" style="left:94.5px;top:16.5px">View</div>
<div class="t" style="left:118px;top:16.5px">Select</div>
<div class="t" style="left:145.75px;top:16.5px">Add</div>
<div class="t" style="left:166.75px;top:16.5px">Object</div>
<!-- center header -->
<div class="a" style="left:481px;top:14px;width:46px;height:12px;background:#262626;border-radius:3px"></div>
<svg style="left:483px;top:15px" width="11" height="10" viewBox="0 0 11 10"><path d="M2,1 V8.5 H9.5 M2,8.5 L6,4.5" stroke="#ddd" stroke-width="1" fill="none"/><circle cx="2" cy="1.5" r="1" fill="#eee"/><circle cx="9.5" cy="8.5" r="1" fill="#eee"/></svg>
<div class="t" style="left:496.75px;top:16.5px;color:#eee">Global</div>
<svg style="left:521px;top:18.5px" width="5" height="4" viewBox="0 0 5 4"><path d="M.5,1 L2.5,3 L4.5,1" stroke="#ccc" fill="none" stroke-width=".8"/></svg>
<div class="a" style="left:530px;top:14px;width:18px;height:12px;background:#2a2a2a;border-radius:3px"></div>
<svg style="left:531px;top:15px" width="16" height="10" viewBox="0 0 16 10"><circle cx="4" cy="6" r="2.6" fill="none" stroke="#ddd" stroke-width="1"/><circle cx="6.5" cy="4" r="2.6" fill="none" stroke="#ddd" stroke-width="1"/><path d="M11,4.5 L12.5,6 L14,4.5" stroke="#ccc" fill="none" stroke-width=".8"/></svg>
<div class="a" style="left:550px;top:14px;width:31px;height:12px;background:#262626;border-radius:3px"></div>
<div class="a" style="left:550.5px;top:14px;width:11px;height:12px;background:#4a4a4a;border-radius:3px 0 0 3px"></div>
<svg style="left:551.5px;top:15.5px" width="9" height="9" viewBox="0 0 9 9"><path d="M2,7 A3,3 0 1 1 7,6" stroke="#999" stroke-width="1.8" fill="none"/></svg>
<svg style="left:562px;top:15px" width="18" height="10" viewBox="0 0 18 10"><path d="M1,5 V8 H9 V5 M3,6.5 H7" stroke="#ddd" stroke-width=".9" fill="none"/><circle cx="8" cy="2" r="1.3" fill="#eee"/><path d="M12,4.5 L13.5,6 L15,4.5" stroke="#ccc" fill="none" stroke-width=".8"/></svg>
<div class="a" style="left:582.5px;top:14px;width:28px;height:12px;background:#2a2a2a;border-radius:3px"></div>
<div class="a" style="left:582.5px;top:14px;width:11px;height:12px;background:#4a4a4a;border-radius:3px 0 0 3px"></div>
<svg style="left:583.5px;top:15.5px" width="9" height="9" viewBox="0 0 9 9"><circle cx="4.5" cy="4.5" r="3" fill="none" stroke="#777" stroke-width=".8"/><circle cx="4.5" cy="4.5" r="1.2" fill="#ddd"/></svg>
<svg style="left:595px;top:15px" width="15" height="10" viewBox="0 0 15 10"><path d="M1,9 C4,9 4,1 5.5,1 C7,1 7,9 10,9" stroke="#aaa" stroke-width=".9" fill="none"/><path d="M11,4.5 L12.5,6 L14,4.5" stroke="#666" fill="none" stroke-width=".8"/></svg>
<!-- right header -->
<div class="a" style="left:957px;top:14px;width:20px;height:12px;background:#262626;border-radius:3px"></div>
<svg style="left:958.5px;top:15px" width="18" height="10" viewBox="0 0 18 10"><path d="M1,4 C3,1 7,1 9,4 C7,7 3,7 1,4Z" fill="#eee"/><circle cx="6" cy="3.5" r="1.5" fill="#262626"/><path d="M2,9 L8,2" stroke="#262626" stroke-width="1"/><path d="M12,4.5 L13.5,6 L15,4.5" stroke="#ccc" fill="none" stroke-width=".8"/></svg>
<div class="a" style="left:979px;top:14px;width:22px;height:12px;background:#262626;border-radius:3px"></div>
<div class="a" style="left:979.5px;top:14px;width:11px;height:12px;background:#4772b3;border-radius:3px 0 0 3px"></div>
<svg style="left:980px;top:15px" width="18" height="10" viewBox="0 0 18 10"><path d="M1.5,9 L8,2 M4,2 H8 V6 M2,3 C5,3 7,6 7,9" stroke="#fff" stroke-width="1" fill="none"/><path d="M13,4.5 L14.5,6 L16,4.5" stroke="#ccc" fill="none" stroke-width=".8"/></svg>
<div class="a" style="left:1005px;top:14px;width:21px;height:12px;background:#262626;border-radius:3px"></div>
<div class="a" style="left:1005px;top:14px;width:11px;height:12px;background:#4772b3;border-radius:3px 0 0 3px"></div>
<svg style="left:1005.5px;top:15px" width="20" height="10" viewBox="0 0 20 10"><circle cx="5.5" cy="5" r="3.6" fill="#fff"/><circle cx="6.5" cy="4.5" r="2" fill="#4772b3"/><path d="M14,4.5 L15.5,6 L17,4.5" stroke="#ccc" fill="none" stroke-width=".8"/></svg>
<div class="a" style="left:1030px;top:14px;width:11px;height:12px;background:#3a3a3a;border-radius:3px"></div>
<svg style="left:1031px;top:15.5px" width="9" height="9" viewBox="0 0 9 9"><rect x="1" y="3" width="5" height="5" fill="none" stroke="#bbb" stroke-width=".9"/><path d="M1,3 L3,1 H8 V6 L6,8 M6,3 L8,1" stroke="#bbb" stroke-width=".9" fill="none"/></svg>
<div class="a" style="left:1044.5px;top:14px;width:43px;height:12px;background:#3a3a3a;border-radius:3px"></div>
<div class="a" style="left:1054.5px;top:14px;width:11.5px;height:12px;background:#4772b3"></div>
<svg style="left:1045px;top:14.5px" width="43" height="11" viewBox="0 0 43 11"><circle cx="5" cy="5.5" r="3.8" fill="none" stroke="#ccc" stroke-width=".9"/><path d="M1.2,5.5 H8.8 M5,1.7 V9.3" stroke="#ccc" stroke-width=".7"/><circle cx="15.3" cy="5.5" r="4.2" fill="#fff"/><circle cx="26" cy="5.5" r="4" fill="#888" stroke="#ccc" stroke-width=".8"/><path d="M26,1.5 A4,4 0 0 1 30,5.5 L26,5.5Z" fill="#eee"/><path d="M22.5,7 A4,4 0 0 0 26,9.5 V5.5Z" fill="#333"/><circle cx="36.5" cy="5.5" r="4" fill="#777" stroke="#bbb" stroke-width=".8"/><path d="M34,8 L39,3" stroke="#ddd" stroke-width="1.1"/></svg>
<div class="a" style="left:1088px;top:14px;width:11px;height:12px;background:#262626;border-radius:3px"></div><svg style="left:1091px;top:18.5px" width="6" height="4" viewBox="0 0 6 4"><path d="M.5,1 L3,3.2 L5.5,1" stroke="#ccc" fill="none" stroke-width=".8"/></svg>
<div class="a" style="left:1058px;top:27px;width:46px;height:16px;background:#2f2f2f;border-radius:0 0 0 4px"></div><div class="a" style="left:1062.5px;top:30.5px;width:37px;height:10px;background:#232323;border-radius:3px"></div>
<div class="t" style="left:1065.5px;top:31.5px">Options</div>
<svg style="left:1093px;top:34px" width="5" height="4" viewBox="0 0 5 4"><path d="M.5,1 L2.5,3 L4.5,1" stroke="#ccc" fill="none" stroke-width=".8"/></svg>
<!-- select mode -->
<div class="a" style="left:4.5px;top:30px;width:54px;height:11px;background:#2b2b2b;border-radius:2px"></div>
<svg style="left:5px;top:30.5px" width="54" height="10" viewBox="0 0 54 10">
<rect x="0" y="0" width="10.5" height="10" rx="1.5" fill="#4772b3"/><rect x="1.5" y="1.5" width="7.5" height="7" fill="none" stroke="#cfd8e8" stroke-width=".8" stroke-dasharray="1.4,.9"/>
<rect x="12" y="1.5" width="8" height="7" fill="#bbb"/><rect x="12" y="1.5" width="4" height="3.5" fill="#777"/>
<rect x="22.5" y="1.5" width="8" height="7" fill="none" stroke="#aaa" stroke-width=".8" stroke-dasharray="1.4,.9"/><rect x="26" y="1.5" width="4.5" height="4" fill="#ddd"/>
<rect x="33" y="1.5" width="8" height="7" fill="#ccc"/><rect x="35" y="3.5" width="4" height="3" fill="#333"/>
<rect x="43.5" y="1.5" width="8" height="7" fill="none" stroke="#aaa" stroke-width=".8" stroke-dasharray="1.4,.9"/><rect x="45.8" y="3.6" width="3.5" height="3" fill="#ccc"/>
</svg>
<div class="t w" style="left:38.75px;top:48px;letter-spacing:-0.09px">User Perspective</div>
<div class="t w" style="left:38.75px;top:58.5px;letter-spacing:-0.17px">(1) Scene Collection | submesh_02_LOD_1</div>
<!-- toolbar -->
<div class="a" style="left:5px;top:48px;width:24px;height:38px;background:#2c2c2c;border-radius:3px"></div>
<div class="a" style="left:5px;top:48px;width:24px;height:18.5px;background:#4772b3;border-radius:3px 3px 0 0"></div>
<div class="a" style="left:5px;top:89px;width:24px;height:77px;background:#2c2c2c;border-radius:3px"></div>
<div class="a" style="left:5px;top:171px;width:24px;height:37px;background:#2c2c2c;border-radius:3px"></div>
<div class="a" style="left:5px;top:212px;width:24px;height:19px;background:#2c2c2c;border-radius:3px"></div>
<svg style="left:5px;top:48px" width="24" height="184" viewBox="0 0 24 184">
<rect x="6.5" y="3.5" width="11" height="11" fill="none" stroke="#d8c9a8" stroke-width=".9" stroke-dasharray="1.6,1.1"/><path d="M10,6 L10,13 L12,11 L14,13.5 L15,12.7 L13,10.5 L15.5,10Z" fill="#fff"/>
<circle cx="12" cy="27.5" r="6" fill="none" stroke="#ddd" stroke-width=".9" stroke-dasharray="3,1.2"/><path d="M12,22.5 V26 M12,29 V32.5 M7,27.5 H10.5 M13.5,27.5 H17" stroke="#ddd" stroke-width=".9"/>
<path d="M12,43 V57 M5,50 H19 M10,45 L12,43 L14,45 M10,55 L12,57 L14,55 M7,48 L5,50 L7,52 M17,48 L19,50 L17,52" stroke="#eee" stroke-width="1.2" fill="none"/><circle cx="12" cy="50" r="1.6" fill="#eee"/>
<path d="M6.5,68 A5.8,5.8 0 0 1 17.5,68 M17.5,72 A5.8,5.8 0 0 1 6.5,72" stroke="#eee" stroke-width="1.1" fill="none"/><circle cx="12" cy="70" r="2" fill="#eee"/><path d="M5,67 L6.5,69 L8,67 M16,73 L17.5,71 L19,73" fill="#eee"/>
<rect x="7" y="85" width="10" height="9" fill="none" stroke="#ddd" stroke-width=".9"/><rect x="7" y="89.5" width="5.5" height="4.5" fill="#eee"/><path d="M12,89 L16.5,85.5" stroke="#ddd" stroke-width=".9"/>
<circle cx="12" cy="108.8" r="6" fill="none" stroke="#ddd" stroke-width=".9" stroke-dasharray="3,1.2"/><rect x="9" y="106" width="6" height="5.6" fill="#eee"/>
<path d="M7,136 L15,128 L16.5,129.5 L8.5,137.5Z" fill="#ddd"/><path d="M9,138 C12,133 14,136 18,135" stroke="#ccc" stroke-width=".8" fill="none"/>
<path d="M8,144 V158 H19 M8,158" stroke="#ddd" stroke-width="1.1" fill="none"/><path d="M9,150 A8,8 0 0 1 17,157 H9Z" fill="#7fd1b6"/>
<rect x="7.5" y="168" width="9" height="9" fill="none" stroke="#ddd" stroke-width=".9"/><path d="M16.5,168 L18.5,166 V175 L16.5,177 M7.5,168 L9.5,166 H18.5" stroke="#ddd" stroke-width=".9" fill="none"/><path d="M6,162 V166 M4,164 H8" stroke="#8fe0c4" stroke-width=".9"/>
</svg>
<!-- gizmo -->
<svg style="left:1020px;top:44px" width="60" height="56" viewBox="1020 44 60 56">
<circle cx="1046.3" cy="67.7" r="4" fill="none" stroke="#6a8a52" stroke-width="1"/>
<path d="M1048,53 V74.5" stroke="#5d8ecf" stroke-width="1.3"/>
<path d="M1028.7,71.9 H1048" stroke="#d04a5c" stroke-width="1.3"/>
<circle cx="1048.3" cy="90" r="4.3" fill="#3c5d8f"/>
<circle cx="1067" cy="71.9" r="4.3" fill="#8f3c48"/><circle cx="1067" cy="71.9" r="2.5" fill="none" stroke="#c9515f" stroke-width=".7"/>
<circle cx="1048" cy="53.2" r="4.5" fill="#3b84e0"/>
<circle cx="1028.7" cy="71.9" r="4.5" fill="#e0354f"/>
<circle cx="1048.8" cy="74.7" r="4.8" fill="#7ec92a"/>
<text x="1048" y="55.6" font-size="6.5" fill="#10243f" text-anchor="middle" font-family="Liberation Sans" font-weight="bold">Z</text>
<text x="1028.7" y="74.3" font-size="6.5" fill="#3a0b12" text-anchor="middle" font-family="Liberation Sans" font-weight="bold">X</text>
<text x="1048.8" y="77.1" font-size="6.5" fill="#1d3806" text-anchor="middle" font-family="Liberation Sans" font-weight="bold">Y</text>
</svg>
<svg style="left:1054px;top:94px" width="20" height="72" viewBox="0 0 20 72">
<circle cx="9.6" cy="9.4" r="6.5" fill="#2d2d2d"/><circle cx="10.6" cy="8.2" r="2.6" fill="none" stroke="#eee" stroke-width="1.1"/><path d="M8.8,10 L6,13" stroke="#eee" stroke-width="1.4"/>
<circle cx="9.6" cy="26.7" r="6.5" fill="#2d2d2d"/><path d="M7,31 C5,28 5,25 6,24 L7,26 V21.5 H8.2 V25 V20.5 H9.4 V25 V21 H10.6 V25 V22 H11.8 V27 L13,25.5 L14,26 C12,29 12,31 10,31.5Z" fill="#eee"/>
<circle cx="9.6" cy="44.8" r="6.5" fill="#2d2d2d"/><circle cx="10" cy="41.5" r="2.3" fill="none" stroke="#eee" stroke-width="1"/><rect x="6" y="44" width="7" height="4" fill="none" stroke="#eee" stroke-width=".9"/><path d="M13,45 L15,44 V48 L13,47" fill="#eee"/>
<circle cx="9.6" cy="63" r="6.5" fill="#2d2d2d"/><path d="M6,60 H13 L14,66 H5Z M5.5,63 H13.5 M8,60 L7.5,66 M11,60 L11.5,66" stroke="#eee" stroke-width=".9" fill="none"/>
</svg>
<!-- n-panel tabs -->
<div class="a" style="left:1092px;top:43px;width:1.6px;height:673px;background:#0c0c0c"></div><div class="a" style="left:1104px;top:12px;width:1px;height:704px;background:#161616"></div><div class="a" style="left:1091px;top:509px;width:1px;height:207px;background:#9a9c9e"></div>
<div class="a" style="left:1084px;top:49px;width:4px;height:2px;background:#555"></div>
<svg style="left:1088px;top:48px" width="5" height="4" viewBox="0 0 5 4"><path d="M.5,1 L2.5,3 L4.5,1" stroke="#ccc" fill="none" stroke-width=".8"/></svg>
<div class="a" style="left:1092.5px;top:45px;width:10.5px;height:22px;background:#2c2c2c;border-radius:0 3px 3px 0"></div>
<div class="a" style="left:1092.5px;top:70px;width:10.5px;height:22px;background:#2c2c2c;border-radius:0 3px 3px 0"></div>
<div class="a" style="left:1092.5px;top:95px;width:10.5px;height:22px;background:#2c2c2c;border-radius:0 3px 3px 0"></div>
<div class="a" style="left:1092.5px;top:120px;width:10.5px;height:54px;background:#2c2c2c;border-radius:0 3px 3px 0"></div>
<div class="a" style="left:1092.5px;top:177px;width:10.5px;height:44px;background:#2c2c2c;border-radius:0 3px 3px 0"></div>
<div class="t" style="left:1101.5px;top:47px;transform-origin:0 0;transform:rotate(90deg)">Item</div>
<div class="t" style="left:1101.5px;top:73px;transform-origin:0 0;transform:rotate(90deg)">Tool</div>
<div class="t" style="left:1101.5px;top:98px;transform-origin:0 0;transform:rotate(90deg)">View</div>
<div class="t" style="left:1101.5px;top:123px;transform-origin:0 0;transform:rotate(90deg)">CP77 Modding</div>
<div class="t" style="left:1101.5px;top:181px;transform-origin:0 0;transform:rotate(90deg)">Retargeting</div>
<svg style="left:1088px;top:170px" width="8" height="13" viewBox="0 0 8 13"><path d="M1,1 L1,11 L3.3,8.8 L5,12.2 L6.4,11.6 L4.8,8.2 L7.6,8Z" fill="#fff" stroke="#111" stroke-width=".6"/></svg>
<!-- symbols -->
<svg width="0" height="0" style="left:0;top:0;position:absolute">
<defs>
<symbol id="tri" viewBox="0 0 10 10"><path d="M1.5,1.8 H8.5 L5,8.6Z" fill="none" stroke="currentColor" stroke-width="1.3" stroke-linejoin="round"/></symbol>
<symbol id="meshd" viewBox="0 0 10 10"><path d="M1.5,1.5 H8.5 L6,6.5 V9 H4 V6.5Z" fill="none" stroke="currentColor" stroke-width="1.2"/><circle cx="5" cy="4" r="1.1" fill="currentColor"/></symbol>
<symbol id="arm" viewBox="0 0 10 10"><circle cx="5" cy="1.8" r="1.3" fill="currentColor"/><path d="M1,3.8 H9 M5,3.8 L5,6 M2,9.5 L5,6 L8,9.5" stroke="currentColor" stroke-width="1.3" fill="none"/></symbol>
<symbol id="pose" viewBox="0 0 10 10"><path d="M1,9 L5,5 L8,9 M2,1.5 L5,5 M6.5,2 L8.8,3.6 M3,2.8 L1,1" stroke="currentColor" stroke-width="1.2" fill="none"/><circle cx="7.5" cy="1.6" r="1.2" fill="currentColor"/></symbol>
<symbol id="vg" viewBox="0 0 10 10"><path d="M2,1 V9 M5,1 V9 M8,1 V9" stroke="#ddd" stroke-width=".8" stroke-dasharray="1.5,1"/><rect x="1" y="3" width="2" height="2" fill="#eee"/><rect x="4" y="5.5" width="2" height="2" fill="#eee"/><rect x="7" y="2" width="2" height="2" fill="#eee"/></symbol>
<symbol id="eye" viewBox="0 0 10 10"><path d="M.8,5 C3,1.5 7,1.5 9.2,5 C7,8.5 3,8.5 .8,5Z" fill="none" stroke="#e6e6e6" stroke-width="1"/><circle cx="5" cy="5" r="1.7" fill="#e6e6e6"/></symbol>
<symbol id="cam" viewBox="0 0 10 10"><rect x=".8" y="2.6" width="8.4" height="6.2" rx="1" fill="none" stroke="currentColor" stroke-width="1"/><rect x="3" y="1" width="4" height="2" fill="currentColor"/><circle cx="5" cy="5.7" r="1.7" fill="none" stroke="currentColor" stroke-width="1"/></symbol>
<symbol id="coll" viewBox="0 0 10 10"><rect x="1" y="1" width="8" height="1.6" fill="#eee"/><rect x="1" y="3.6" width="8" height="5.4" fill="#eee"/><rect x="3.5" y="5" width="3" height="1.5" fill="#333"/></symbol>
<symbol id="chevr" viewBox="0 0 6 6"><path d="M1.8,.6 L4.2,3 L1.8,5.4" fill="none" stroke="#d0d0d0" stroke-width="1"/></symbol>
<symbol id="chevd" viewBox="0 0 6 6"><path d="M.6,1.8 L3,4.2 L5.4,1.8" fill="none" stroke="#d0d0d0" stroke-width="1"/></symbol>
<symbol id="bone" viewBox="0 0 10 10"><path d="M2.5,2.5 L7.5,7.5" stroke="currentColor" stroke-width="2"/><circle cx="2" cy="2" r="1.4" fill="currentColor"/><circle cx="8" cy="8" r="1.4" fill="currentColor"/></symbol>
<symbol id="bcoll" viewBox="0 0 10 10"><circle cx="5" cy="5" r="4" fill="none" stroke="#ddd" stroke-width="1" stroke-dasharray="2,1.3"/><path d="M3,3 L7,7" stroke="#ddd" stroke-width="1.6"/></symbol>
</defs>
</svg>
<!-- outliner header -->
<div class="a" style="left:1110px;top:14px;width:16px;height:12px;background:#242424;border-radius:3px"></div>
<svg style="left:1111px;top:15px" width="15" height="10" viewBox="0 0 15 10"><rect x="1" y="1" width="3" height="2" fill="#eee"/><path d="M2.2,3 V8.5 H5 M2.2,5.8 H5" stroke="#ddd" stroke-width=".8" fill="none"/><rect x="5" y="5" width="4" height="1.6" fill="#eee"/><rect x="5" y="7.8" width="4" height="1.6" fill="#eee"/><path d="M10.5,4.5 L12,6 L13.5,4.5" stroke="#ccc" fill="none" stroke-width=".8"/></svg>
<div class="a" style="left:1131px;top:14px;width:16px;height:12px;background:#242424;border-radius:3px"></div>
<svg style="left:1132px;top:15px" width="15" height="10" viewBox="0 0 15 10"><path d="M1.5,3 L3.5,1 H8 V8.5 H1.5Z" fill="none" stroke="#ccc" stroke-width=".9"/><path d="M3,8 L5.5,4 L8,8Z" fill="#eee"/><path d="M10.5,4.5 L12,6 L13.5,4.5" stroke="#ccc" fill="none" stroke-width=".8"/></svg>
<div class="a" style="left:1262.5px;top:15.5px;width:67px;height:10px;background:#1e1e1e;border-radius:3px"></div>
<svg style="left:1264px;top:16.5px" width="10" height="9" viewBox="0 0 10 9"><circle cx="5.8" cy="3.6" r="2.6" fill="none" stroke="#ddd" stroke-width="1"/><path d="M4,5.5 L1,8.3" stroke="#ddd" stroke-width="1.2"/></svg>
<div class="t" style="left:1277px;top:16.5px;color:#6e6e6e">Search</div>
<svg style="left:1464px;top:15px" width="15" height="10" viewBox="0 0 15 10"><path d="M1,1.5 H8.5 L5.8,5 V9 L3.8,7.8 V5Z" fill="none" stroke="#ddd" stroke-width=".9"/><path d="M10.5,4.5 L12,6 L13.5,4.5" stroke="#ccc" fill="none" stroke-width=".8"/></svg>
<div class="a" style="left:1483.5px;top:14.5px;width:11.5px;height:11px;background:#3d3d3d;border-radius:2px"></div>
<svg style="left:1484.5px;top:15.5px" width="10" height="9" viewBox="0 0 10 9"><rect x="1" y="2" width="6" height="6" fill="none" stroke="#bbb" stroke-width=".9"/><circle cx="7.5" cy="2.2" r="1.6" fill="none" stroke="#ddd" stroke-width=".9"/></svg>
<!-- outliner rows -->
<div class="a" style="left:1121.5px;top:52px;width:1px;height:34px;background:#4a4a4a"></div>
<svg style="left:1116.5px;top:29px" width="10" height="10"><use href="#coll" width="10" height="10"/></svg>
<div class="t" style="left:1129.3px;top:30.1px">Scene Collection</div>

<svg style="left:1118.5px;top:42.5px" width="6" height="6"><use href="#chevd" width="6" height="6"/></svg>
<svg style="left:1128.5px;top:41px" width="9" height="9"><use href="#coll" width="9" height="9"/></svg>
<div class="t" style="left:1140.5px;top:41.9px;letter-spacing:-0.1px">tuto_beer_bottle</div>

<svg style="left:1130.5px;top:53.8px" width="6" height="6"><use href="#chevr" width="6" height="6"/></svg>
<svg style="left:1140px;top:52.3px;color:#e8945a" width="9" height="9"><use href="#tri" width="9" height="9"/></svg>
<div class="t" style="left:1152px;top:52.8px;letter-spacing:-0.37px">submesh_00_LOD_1</div>
<svg style="left:1226.5px;top:52.3px" width="9" height="9"><use href="#vg" width="9" height="9"/></svg>
<svg style="left:1238.5px;top:52.3px;color:#4db79d" width="9" height="9"><use href="#meshd" width="9" height="9"/></svg>

<svg style="left:1130.5px;top:65.3px" width="6" height="6"><use href="#chevr" width="6" height="6"/></svg>
<svg style="left:1140px;top:63.8px;color:#e8945a" width="9" height="9"><use href="#tri" width="9" height="9"/></svg>
<div class="t" style="left:1152px;top:64.3px;letter-spacing:-0.37px">submesh_01_LOD_1</div>
<svg style="left:1226.5px;top:63.8px" width="9" height="9"><use href="#vg" width="9" height="9"/></svg>
<svg style="left:1238.5px;top:63.8px;color:#4db79d" width="9" height="9"><use href="#meshd" width="9" height="9"/></svg>

<svg style="left:1130.5px;top:76.7px" width="6" height="6"><use href="#chevr" width="6" height="6"/></svg>
<div class="a" style="left:1138.5px;top:74px;width:12px;height:11.5px;background:#4d4d4d;border-radius:2px"></div>
<svg style="left:1140px;top:75.2px;color:#e8945a" width="9" height="9"><use href="#tri" width="9" height="9"/></svg>
<div class="t" style="left:1152px;top:75.7px;letter-spacing:-0.37px">submesh_02_LOD_1</div>
<svg style="left:1226.5px;top:75.2px" width="9" height="9"><use href="#vg" width="9" height="9"/></svg>
<svg style="left:1238.5px;top:75.2px;color:#4db79d" width="9" height="9"><use href="#meshd" width="9" height="9"/></svg>

<svg style="left:1119px;top:88.2px" width="6" height="6"><use href="#chevr" width="6" height="6"/></svg>
<svg style="left:1128.5px;top:86.7px;color:#e8945a" width="9" height="9"><use href="#arm" width="9" height="9"/></svg>
<div class="t" style="left:1140.5px;top:87.2px">Armature</div>
<svg style="left:1181.5px;top:86.7px;color:#4db79d" width="9" height="9"><use href="#pose" width="9" height="9"/></svg>
<svg style="left:1192.8px;top:86.7px;color:#4db79d" width="9" height="9"><use href="#arm" width="9" height="9"/></svg>

<svg style="left:1119px;top:99.4px" width="6" height="6"><use href="#chevr" width="6" height="6"/></svg>
<svg style="left:1128.5px;top:97.9px;color:#e8945a" width="9" height="9"><use href="#tri" width="9" height="9"/></svg>
<div class="t" style="left:1140.5px;top:98.4px">Floor</div>
<svg style="left:1168.8px;top:97.9px;color:#4db79d" width="9" height="9"><use href="#meshd" width="9" height="9"/></svg>

<svg style="left:1119px;top:110.6px;opacity:.5" width="6" height="6"><use href="#chevr" width="6" height="6"/></svg>
<svg style="left:1128.5px;top:109.1px;color:#e8945a" width="9" height="9"><use href="#arm" width="9" height="9"/></svg>
<div class="t" style="left:1140.5px;top:109.6px;color:#777;letter-spacing:-0.33px">Mannequin_Skel_IGNORE</div>
<svg style="left:1232px;top:109.1px;color:#3d8a77" width="9" height="9"><use href="#pose" width="9" height="9"/></svg>
<svg style="left:1243.5px;top:109.1px;color:#3d8a77" width="9" height="9"><use href="#arm" width="9" height="9"/></svg>
<svg style="left:1254.7px;top:109.1px;color:#b3744a" width="9" height="9"><use href="#tri" width="9" height="9"/></svg>
<div class="t" style="left:1262px;top:112.5px;font-size:5px;color:#aaa">2</div>

<svg style="left:1118.5px;top:122px" width="6" height="6"><use href="#chevd" width="6" height="6"/></svg>
<svg style="left:1128.5px;top:120.5px;color:#e8945a" width="9" height="9"><use href="#arm" width="9" height="9"/></svg>
<div class="t" style="left:1140.5px;top:121px;letter-spacing:-0.43px">Prop_DONT_POSE</div>

<svg style="left:1140px;top:131.8px;color:#4db79d" width="9" height="9"><use href="#pose" width="9" height="9"/></svg>
<div class="t" style="left:1152px;top:132.3px">Pose</div>

<svg style="left:1130px;top:144.7px" width="6" height="6"><use href="#chevd" width="6" height="6"/></svg>
<svg style="left:1140px;top:143.2px;color:#4db79d" width="9" height="9"><use href="#arm" width="9" height="9"/></svg>
<div class="t" style="left:1152px;top:143.7px">Armature.001</div>

<svg style="left:1152px;top:154.4px;color:#4db79d" width="9" height="9"><use href="#bone" width="9" height="9"/></svg>
<div class="t" style="left:1163.2px;top:154.9px">base</div>

<svg style="left:1142px;top:167.4px" width="6" height="6"><use href="#chevr" width="6" height="6"/></svg>
<svg style="left:1152px;top:165.9px" width="9" height="9"><use href="#bcoll" width="9" height="9"/></svg>
<div class="t" style="left:1163.2px;top:166.4px">Bone Collections</div>
<svg style="left:1228px;top:165.9px" width="9" height="9"><use href="#bcoll" width="9" height="9"/></svg>

<!-- right column -->
<div class="a" style="left:1462.5px;top:42px;width:7px;height:7px;background:#e6e6e6;border-radius:1.5px"></div>
<svg style="left:1463.5px;top:43px" width="5" height="5" viewBox="0 0 5 5"><path d="M.8,2.5 L2,3.8 L4.2,1.2" stroke="#222" stroke-width="1" fill="none"/></svg>
<svg style="left:1471.5px;top:41px" width="10" height="10"><use href="#eye" width="10" height="10"/></svg>
<svg style="left:1483.5px;top:41px;color:#e6e6e6" width="10" height="10"><use href="#cam" width="10" height="10"/></svg>
<svg style="left:1471.5px;top:51.8px" width="10" height="10"><use href="#eye" width="10" height="10"/></svg>
<svg style="left:1483.5px;top:51.8px;color:#e6e6e6" width="10" height="10"><use href="#cam" width="10" height="10"/></svg>
<svg style="left:1471.5px;top:63.3px" width="10" height="10"><use href="#eye" width="10" height="10"/></svg>
<svg style="left:1483.5px;top:63.3px;color:#e6e6e6" width="10" height="10"><use href="#cam" width="10" height="10"/></svg>
<svg style="left:1471.5px;top:74.7px" width="10" height="10"><use href="#eye" width="10" height="10"/></svg>
<svg style="left:1483.5px;top:74.7px;color:#e6e6e6" width="10" height="10"><use href="#cam" width="10" height="10"/></svg>
<svg style="left:1471.5px;top:86.2px" width="10" height="10"><use href="#eye" width="10" height="10"/></svg>
<svg style="left:1483.5px;top:86.2px;color:#e6e6e6" width="10" height="10"><use href="#cam" width="10" height="10"/></svg>
<svg style="left:1471.5px;top:97.4px" width="10" height="10"><use href="#eye" width="10" height="10"/></svg>
<svg style="left:1483.5px;top:97.4px;color:#e6e6e6" width="10" height="10"><use href="#cam" width="10" height="10"/></svg>
<svg style="left:1471.5px;top:108.6px" width="10" height="10"><use href="#eye" width="10" height="10"/></svg>
<svg style="left:1483.5px;top:108.6px;color:#aaa" width="10" height="10"><use href="#cam" width="10" height="10"/></svg>
<svg style="left:1471.5px;top:120px" width="10" height="10"><use href="#eye" width="10" height="10"/></svg>
<svg style="left:1483.5px;top:120px;color:#e6e6e6" width="10" height="10"><use href="#cam" width="10" height="10"/></svg>
<!-- text editor header -->
<svg style="left:1110.5px;top:248px" width="16" height="11" viewBox="0 0 16 11"><rect x="1" y="1" width="7" height="9" rx="1" fill="#ddd"/><path d="M3,3.5 H6 M3,5.5 H6 M3,7.5 H5" stroke="#555" stroke-width=".8"/><path d="M10.5,5 L12,6.5 L13.5,5" stroke="#ccc" fill="none" stroke-width=".8"/></svg>
<div class="t" style="left:1133px;top:249.5px">View</div>
<div class="t" style="left:1157px;top:249.5px">Text</div>
<div class="t" style="left:1179.4px;top:249.5px">Templates</div>
<div class="a" style="left:1255px;top:248.5px;width:16px;height:11px;background:#262626;border-radius:3px 0 0 3px"></div>
<svg style="left:1256px;top:248px" width="16" height="11" viewBox="0 0 16 11"><rect x="1" y="1" width="7" height="9" rx="1" fill="#ddd"/><path d="M3,3.5 H6 M3,5.5 H6 M3,7.5 H5" stroke="#555" stroke-width=".8"/><path d="M10,5 L11.5,6.5 L13,5" stroke="#ccc" fill="none" stroke-width=".8"/></svg>
<div class="a" style="left:1271px;top:249px;width:34px;height:10px;background:#424242"></div>
<div class="t" style="left:1276px;top:248.5px;font-size:9px;color:#ccc">+</div>
<div class="t" style="left:1287px;top:249.5px;color:#ccc">New</div>
<div class="a" style="left:1305.6px;top:249px;width:33px;height:10px;background:#474747;border-radius:0 3px 3px 0"></div>
<svg style="left:1307px;top:250px" width="9" height="8" viewBox="0 0 9 8"><path d="M.5,1 H3.5 L4.5,2 H8.5 V7.5 H.5Z" fill="#eee"/><path d="M.5,3.2 H8.5" stroke="#666" stroke-width=".6"/></svg>
<div class="t" style="left:1318px;top:249.5px">Open</div>
<div class="a" style="left:1462px;top:249px;width:10px;height:10px;background:#4772b3;border-radius:2px 0 0 2px"></div>
<svg style="left:1462.5px;top:250px" width="9" height="8" viewBox="0 0 9 8"><path d="M1,1.5 H2.5 M1,3.5 H2 M1,5.5 H2.5 M3.5,1.5 H8 M3.5,3.5 H8 M3.5,5.5 H8 M1,7 H8" stroke="#fff" stroke-width=".8"/></svg>
<div class="a" style="left:1473px;top:249px;width:10px;height:10px;background:#3d3d3d"></div>
<svg style="left:1473.5px;top:250px" width="9" height="8" viewBox="0 0 9 8"><rect x="1.2" y="1" width="6.5" height="6" fill="none" stroke="#ccc" stroke-width=".8"/><path d="M3,4.5 H5 V3" stroke="#ccc" stroke-width=".7" fill="none"/></svg>
<div class="a" style="left:1484.4px;top:249px;width:10px;height:10px;background:#4772b3;border-radius:0 2px 2px 0"></div>
<svg style="left:1485px;top:250px" width="9" height="8" viewBox="0 0 9 8"><rect x="1" y="1" width="7" height="4" fill="none" stroke="#ccd" stroke-width=".8"/><path d="M2,7 H7" stroke="#ccd" stroke-width=".8"/></svg>
<!-- properties header -->
<div class="a" style="left:1105px;top:260.3px;width:395px;height:1.3px;background:#1d1d1d"></div>
<div class="a" style="left:1105px;top:261.6px;width:395px;height:14.7px;background:#2e2e2e"></div>
<svg style="left:1110.5px;top:263px" width="16" height="11" viewBox="0 0 16 11"><rect x="1" y="1" width="7.5" height="3.8" rx="1.9" fill="#eee"/><rect x="1" y="5.8" width="7.5" height="3.8" rx="1.9" fill="#eee"/><circle cx="6.5" cy="2.9" r="1.3" fill="#333"/><circle cx="3" cy="7.7" r="1.3" fill="#333"/><path d="M10.5,5 L12,6.5 L13.5,5" stroke="#ccc" fill="none" stroke-width=".8"/></svg>
<div class="a" style="left:1270px;top:263.8px;width:66px;height:9.5px;background:#1f1f1f;border-radius:3px"></div>
<svg style="left:1271.5px;top:264.3px" width="10" height="9" viewBox="0 0 10 9"><circle cx="5.8" cy="3.6" r="2.6" fill="none" stroke="#ddd" stroke-width="1"/><path d="M4,5.5 L1,8.3" stroke="#ddd" stroke-width="1.2"/></svg>
<div class="t" style="left:1284px;top:264.5px;color:#6a6a6a">Search</div>
<div class="a" style="left:1485.7px;top:264.4px;width:9px;height:9px;background:#222;border-radius:2px"></div>
<svg style="left:1487.5px;top:267px" width="6" height="4" viewBox="0 0 6 4"><path d="M.5,1 L3,3.2 L5.5,1" stroke="#eee" fill="none" stroke-width=".9"/></svg>
<!-- tab column -->
<div class="a" style="left:1105px;top:276.3px;width:16px;height:440px;background:#232323"></div>
<div class="a" style="left:1106px;top:461px;width:15px;height:14.5px;background:#2e2e2e;border-radius:3px 0 0 3px"></div>
<svg style="left:1107px;top:281px" width="14" height="230" viewBox="1107 281 14 230">
<path d="M1111,285 V292 M1110,287 H1112 M1116,283 L1116,292 M1114,283 L1114,285.5 L1118,285.5 L1118,283" stroke="#ddd" stroke-width="1" fill="none"/><circle cx="1111" cy="291" r="1" fill="#ddd"/>
<path d="M1110,303 H1118 V310 H1110Z M1112,303 V301.5 H1116 V303" stroke="#ddd" stroke-width=".9" fill="none"/>
<path d="M1110,320 H1118 M1110,322 H1118 V328 H1110Z" stroke="#ddd" stroke-width=".9" fill="none"/><rect x="1112.5" y="324" width="3" height="2.5" fill="#ddd"/>
<rect x="1110" y="336" width="8" height="7.5" fill="none" stroke="#ccc" stroke-width=".9"/><path d="M1111.5,342 L1114,338 L1116.5,342Z" fill="#eee"/>
<path d="M1110,358 L1112.5,351 L1115,358Z" fill="#ddd"/><circle cx="1116" cy="355.5" r="2.5" fill="none" stroke="#ddd" stroke-width=".9"/>
<circle cx="1114" cy="371.3" r="4" fill="#b24a3a"/><path d="M1111,369.5 C1113,368 1115,371 1117,369 M1112,374 C1113,372 1116,373 1116.5,374.5" stroke="#333" stroke-width=".8" fill="none"/>
<rect x="1110" y="386.5" width="8" height="8" fill="none" stroke="#e58b4f" stroke-width="1"/><rect x="1111.8" y="388.3" width="4.4" height="4.4" fill="#e58b4f"/>
<path d="M1110,410 L1115,405 M1114,404 A2.3,2.3 0 1 0 1117.5,402.5 L1116,404 L1115.5,403.5 L1117,402" stroke="#5a9ae0" stroke-width="1.4" fill="none"/>
<path d="M1110.5,418 L1117,425 M1110.5,418 L1111,425 H1117" stroke="#6aa8e8" stroke-width=".9" fill="none"/><circle cx="1110.5" cy="418" r="1" fill="#ddd"/><circle cx="1117" cy="425" r="1" fill="#ddd"/>
<circle cx="1114" cy="437.6" r="3.6" fill="none" stroke="#6aa8e8" stroke-width="1"/><circle cx="1114" cy="437.6" r="1.5" fill="#eee"/>
<path d="M1110.5,455 C1110,451 1115,448 1117.5,450 C1118,454 1113,457 1110.5,455Z" fill="none" stroke="#6aa8e8" stroke-width="1.2"/>
<path d="M1110,464 H1118 L1115.5,469 V472 H1112.5 V469Z" fill="none" stroke="#4db79d" stroke-width="1.2"/>
<circle cx="1114" cy="483.7" r="3.8" fill="#e46a6a"/><path d="M1114,479.9 A3.8,3.8 0 0 1 1117.8,483.7 H1114Z" fill="#333"/><path d="M1110.2,483.7 A3.8,3.8 0 0 0 1114,487.5 V483.7Z" fill="#eee"/>
<rect x="1110" y="499.5" width="8" height="8" fill="#c44a4a"/><path d="M1110,499.5 h2v2h-2z M1114,499.5 h2v2h-2z M1112,501.5 h2v2h-2z M1116,501.5 h2v2h-2z M1110,503.5 h2v2h-2z M1114,503.5 h2v2h-2z M1112,505.5 h2v2h-2z M1116,505.5 h2v2h-2z" fill="#e9b0a8"/>
</svg>
<!-- breadcrumb -->
<svg style="left:1127.5px;top:281.5px" width="10" height="10" viewBox="0 0 10 10"><rect x="1" y="1" width="8" height="8" rx="2" fill="none" stroke="#ccc" stroke-width=".8" stroke-dasharray="1.8,1"/><rect x="3" y="3" width="4" height="4" fill="#eee"/></svg>
<div class="t" style="left:1141px;top:282.2px;letter-spacing:-0.37px">submesh_02_LOD_1</div>
<svg style="left:1212px;top:283px" width="6" height="7" viewBox="0 0 6 7"><path d="M1.5,1 L4.5,3.5 L1.5,6" stroke="#ccc" fill="none" stroke-width=".9"/></svg>
<svg style="left:1221.4px;top:281.5px;color:#ddd" width="10" height="10"><use href="#meshd" width="10" height="10"/></svg>
<div class="t" style="left:1234.9px;top:282.2px;letter-spacing:-0.2px">submesh_02_LOD_1.001</div>
<svg style="left:1485.5px;top:282px" width="9" height="9" viewBox="0 0 9 9"><path d="M1,8 L4,5 M3,3 L6,6 M4.5,1.5 L7.5,4.5 L6,6 M4.5,1.5 L3,3" stroke="#ccc" stroke-width=".9" fill="none"/></svg>
<!-- name field -->
<svg style="left:1129px;top:301.5px;color:#ddd" width="15" height="10" viewBox="0 0 15 10"><path d="M1,1.5 H9 L6,6.5 V9 H4 V6.5Z" fill="none" stroke="#ddd" stroke-width="1.1"/><circle cx="5" cy="4" r="1.1" fill="#ddd"/><path d="M10,4.5 L11.5,6 L13,4.5" stroke="#ccc" fill="none" stroke-width=".8"/></svg>
<div class="a" style="left:1145px;top:301.5px;width:338px;height:11px;background:#1d1d1d;border-radius:3px 0 0 3px"></div>
<div class="t" style="left:1148.6px;top:303px;letter-spacing:-0.2px">submesh_02_LOD_1.001</div>
<div class="a" style="left:1483.7px;top:301.5px;width:11px;height:11px;background:#3d3d3d;border-radius:0 3px 3px 0"></div>
<svg style="left:1485px;top:302.5px" width="9" height="9" viewBox="0 0 9 9"><path d="M4.5,1 L8,2.3 V4.8 C8,6.8 6,8 4.5,8.5 C3,8 1,6.8 1,4.8 V2.3Z" fill="none" stroke="#ccc" stroke-width=".9"/></svg>
<!-- Vertex Groups panel -->
<div class="a" style="left:1125.8px;top:318.2px;width:369px;height:89px;background:#2f2f2f;border-radius:3px"></div>
<div class="a" style="left:1125.8px;top:318.2px;width:369px;height:14px;background:#353535;border-radius:3px 3px 0 0"></div>
<svg style="left:1130px;top:322.5px" width="6" height="6"><use href="#chevd" width="6" height="6"/></svg>
<div class="t" style="left:1137.8px;top:321.5px">Vertex Groups</div>
<div class="a" style="left:1487px;top:323px;width:6px;height:3px;border-top:1px solid #444;border-bottom:1px solid #444"></div>
<div class="a" style="left:1131px;top:337.3px;width:343px;height:67px;background:#262626;border-radius:2px"></div>
<div class="a" style="left:1133.7px;top:340px;width:338px;height:11px;background:#4772b3;border-radius:2px"></div>
<svg style="left:1135px;top:341px" width="9" height="9"><use href="#vg" width="9" height="9"/></svg>
<div class="t" style="left:1148px;top:341.5px;color:#fff">base</div>
<svg style="left:1462px;top:341px" width="8" height="9" viewBox="0 0 8 9"><path d="M1,4 V2 A2,2 0 0 1 5,2 M2,4 H7 V8.5 H2Z" stroke="#cfd8ea" stroke-width=".8" fill="none"/></svg>
<svg style="left:1136px;top:396.5px" width="5" height="5" viewBox="0 0 5 5"><path d="M1,.8 L4,2.5 L1,4.2Z" fill="#ddd"/></svg>
<div class="a" style="left:1305px;top:397.5px;width:6px;height:3px;border-top:1px solid #4a4a4a;border-bottom:1px solid #4a4a4a"></div>
<div class="a" style="left:1479.5px;top:336.5px;width:10.5px;height:23px;background:#3a3a3a;border-radius:3px"></div>
<div class="a" style="left:1480px;top:348px;width:9.5px;height:.7px;background:#2a2a2a"></div>
<svg style="left:1480.5px;top:338px" width="8" height="20" viewBox="0 0 8 20"><path d="M4,1.5 V7.5 M1,4.5 H7 M1,16 H7" stroke="#ddd" stroke-width=".9"/></svg>
<div class="a" style="left:1479.5px;top:363px;width:10.5px;height:10.5px;background:#222;border-radius:3px"></div>
<svg style="left:1481.5px;top:366.5px" width="6" height="4" viewBox="0 0 6 4"><path d="M.5,1 L3,3.2 L5.5,1" stroke="#eee" fill="none" stroke-width=".9"/></svg>
<div class="a" style="left:1479.5px;top:377.5px;width:10.5px;height:22px;background:#3a3a3a;border-radius:3px"></div>
<svg style="left:1480.5px;top:379px" width="8" height="20" viewBox="0 0 8 20"><path d="M1.5,5.5 L4,2.5 L6.5,5.5Z M1.5,13 L4,16 L6.5,13Z" fill="#eee"/></svg>
<!-- Shape Keys panel -->
<div class="a" style="left:1125.8px;top:410.5px;width:369px;height:80px;background:#2f2f2f;border-radius:3px"></div>
<div class="a" style="left:1125.8px;top:410.5px;width:369px;height:13px;background:#353535;border-radius:3px 3px 0 0"></div>
<svg style="left:1130px;top:414.5px" width="6" height="6"><use href="#chevd" width="6" height="6"/></svg>
<div class="t" style="left:1137.8px;top:413.5px">Shape Keys</div>
<div class="a" style="left:1487px;top:415px;width:6px;height:3px;border-top:1px solid #444;border-bottom:1px solid #444"></div>
<div class="a" style="left:1131px;top:428.9px;width:343px;height:44px;background:#262626;border-radius:2px"></div>
<svg style="left:1136px;top:465.3px" width="5" height="5" viewBox="0 0 5 5"><path d="M1,.8 L4,2.5 L1,4.2Z" fill="#ddd"/></svg>
<div class="a" style="left:1305px;top:466px;width:6px;height:3px;border-top:1px solid #4a4a4a;border-bottom:1px solid #4a4a4a"></div>
<div class="a" style="left:1479.5px;top:428.5px;width:10.5px;height:23px;background:#3a3a3a;border-radius:3px"></div>
<div class="a" style="left:1480px;top:440px;width:9.5px;height:.7px;background:#2a2a2a"></div>
<svg style="left:1480.5px;top:430px" width="8" height="20" viewBox="0 0 8 20"><path d="M4,1.5 V7.5 M1,4.5 H7" stroke="#ddd" stroke-width=".9"/><path d="M1,16 H7" stroke="#666" stroke-width=".9"/></svg>
<div class="a" style="left:1479.5px;top:455px;width:10.5px;height:10.5px;background:#222;border-radius:3px"></div>
<svg style="left:1481.5px;top:458.5px" width="6" height="4" viewBox="0 0 6 4"><path d="M.5,1 L3,3.2 L5.5,1" stroke="#eee" fill="none" stroke-width=".9"/></svg>
<div class="a" style="left:1131px;top:478px;width:7px;height:7px;background:#4a4a4a;border-radius:1.5px"></div>
<div class="t" style="left:1140.6px;top:478.2px">Add Rest Position</div>
<!-- collapsed panels -->
<div class="row" style="top:494.8px"></div><div class="a" style="left:1487px;top:499.8px;width:6px;height:3px;border-top:1px solid #474747;border-bottom:1px solid #474747"></div><svg style="left:1130px;top:498px" width="6" height="6"><use href="#chevr" width="6" height="6"/></svg><div class="t" style="left:1137.8px;top:497px">UV Maps</div>
<div class="row" style="top:509.7px"></div><div class="a" style="left:1487px;top:514.7px;width:6px;height:3px;border-top:1px solid #474747;border-bottom:1px solid #474747"></div><svg style="left:1130px;top:512.8px" width="6" height="6"><use href="#chevr" width="6" height="6"/></svg><div class="t" style="left:1137.8px;top:511.8px">Color Attributes</div>
<div class="row" style="top:524.5px"></div><div class="a" style="left:1487px;top:529.5px;width:6px;height:3px;border-top:1px solid #474747;border-bottom:1px solid #474747"></div><svg style="left:1130px;top:527.6px" width="6" height="6"><use href="#chevr" width="6" height="6"/></svg><div class="t" style="left:1137.8px;top:526.6px">Attributes</div>
<div class="row" style="top:539.3px"></div><div class="a" style="left:1487px;top:544.3px;width:6px;height:3px;border-top:1px solid #474747;border-bottom:1px solid #474747"></div><svg style="left:1130px;top:542.4px" width="6" height="6"><use href="#chevr" width="6" height="6"/></svg><div class="t" style="left:1137.8px;top:541.4px">Texture Space</div>
<div class="row" style="top:554.2px"></div><div class="a" style="left:1487px;top:559.2px;width:6px;height:3px;border-top:1px solid #474747;border-bottom:1px solid #474747"></div><svg style="left:1130px;top:557.3px" width="6" height="6"><use href="#chevr" width="6" height="6"/></svg><div class="t" style="left:1137.8px;top:556.3px">Remesh</div>
<div class="row" style="top:569px"></div><div class="a" style="left:1487px;top:574.0px;width:6px;height:3px;border-top:1px solid #474747;border-bottom:1px solid #474747"></div><svg style="left:1130px;top:572.1px" width="6" height="6"><use href="#chevr" width="6" height="6"/></svg><div class="t" style="left:1137.8px;top:571.1px">Geometry Data</div>
<div class="row" style="top:583.8px"></div><div class="a" style="left:1487px;top:588.8px;width:6px;height:3px;border-top:1px solid #474747;border-bottom:1px solid #474747"></div><svg style="left:1130px;top:586.9px" width="6" height="6"><use href="#chevr" width="6" height="6"/></svg><div class="t" style="left:1137.8px;top:585.9px">Custom Properties</div>
<div class="a" style="left:1498px;top:12px;width:2px;height:704px;background:#1b1b1b"></div>

</body></html>
